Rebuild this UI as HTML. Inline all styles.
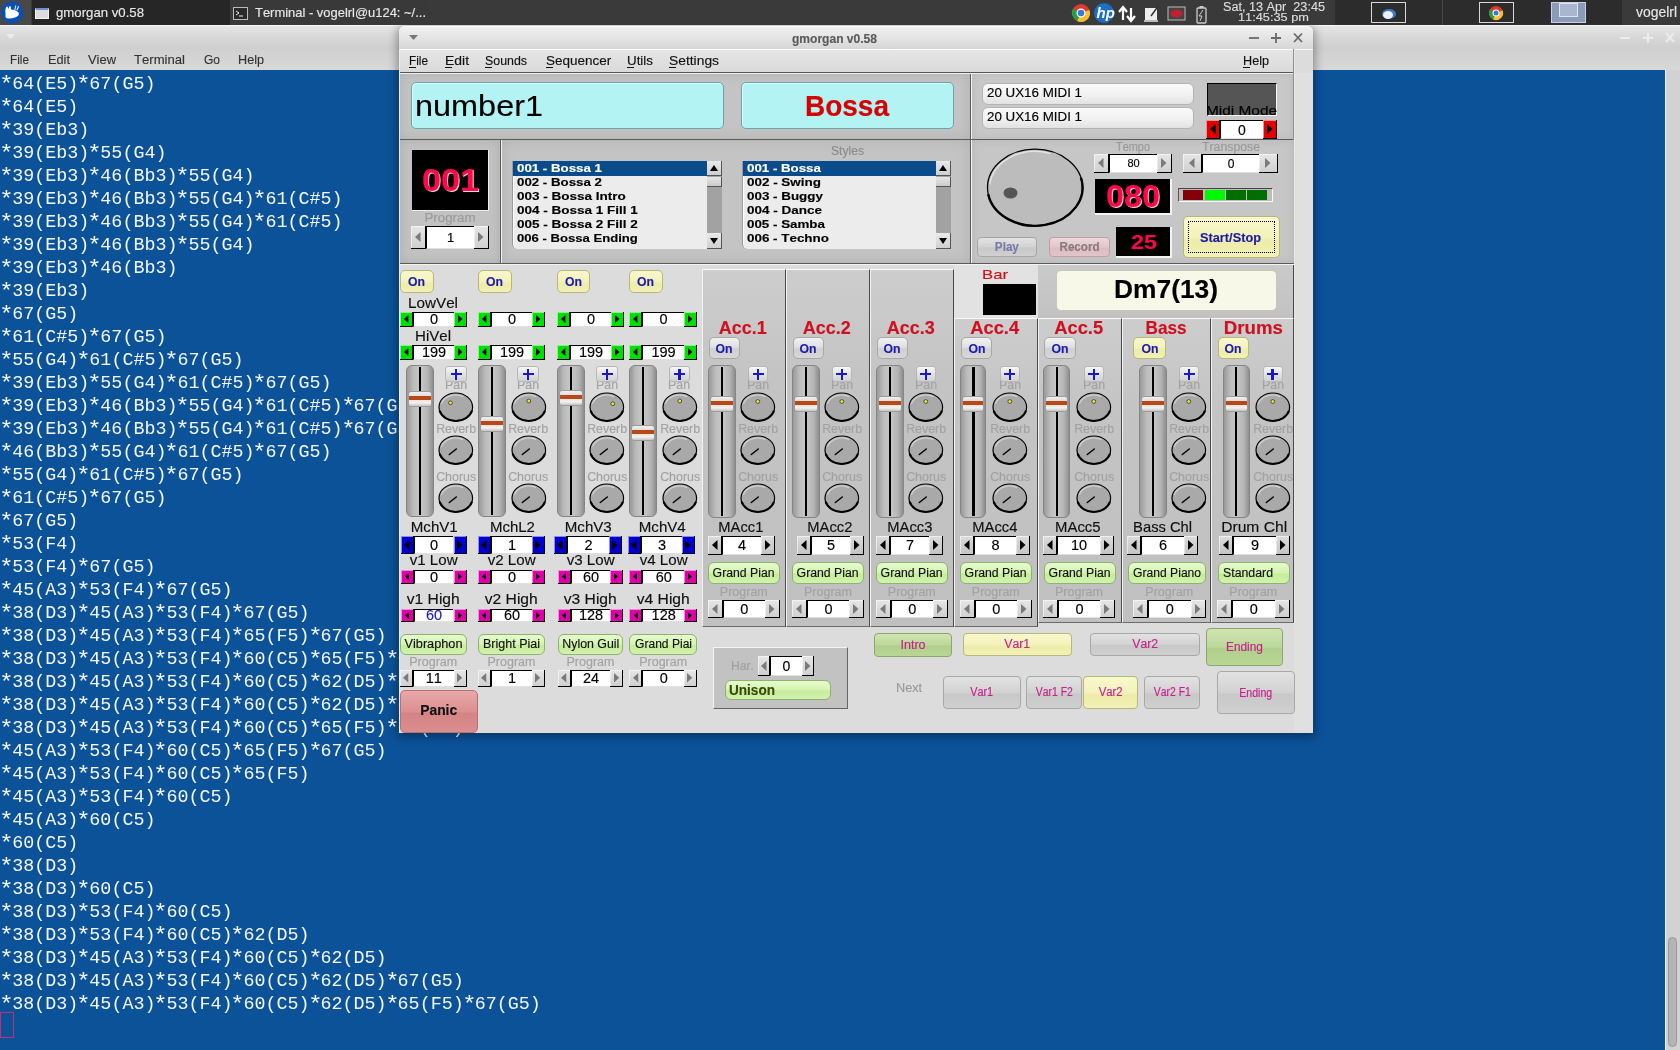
<!DOCTYPE html>
<html><head><meta charset="utf-8"><title>gmorgan</title>
<style>
html,body{margin:0;padding:0;width:1680px;height:1050px;overflow:hidden;background:#0b5299;}
body{position:relative;font-family:"Liberation Sans", sans-serif;font-kerning:none;}
div{position:absolute;box-sizing:border-box;}
#root{left:0;top:0;width:1680px;height:1050px;will-change:transform;}
#root div{-webkit-text-stroke:0.15px currentColor;}
svg{position:absolute;overflow:visible;}
</style></head><body><div id="root">
<div style="left:0px;top:25px;width:1680px;height:24px;background:linear-gradient(#e6e6e6,#dadada 40%,#cecece);border-top:1px solid #f6f6f6;"></div>
<svg style="left:5px;top:33px" width="12" height="8"><path d="M1 1 H10 L5.5 6 Z" fill="#ececec"/></svg>
<svg style="left:1617px;top:30px" width="60" height="16"><path d="M3 8 H13" stroke="#ececec" stroke-width="2"/><path d="M26 8 H36 M31 3 V13" stroke="#ececec" stroke-width="2"/><path d="M49 3 L57 12 M57 3 L49 12" stroke="#ececec" stroke-width="2"/></svg>
<div style="left:0px;top:49px;width:1680px;height:21px;background:linear-gradient(#d0d0d0,#d8d8d8);"></div>
<div style="left:9.50px;top:52.57px;font-size:13.5px;line-height:13.5px;color:#333;white-space:pre;transform:scaleX(0.8734);transform-origin:0 0;">File</div>
<div style="left:47.50px;top:52.57px;font-size:13.5px;line-height:13.5px;color:#333;white-space:pre;transform:scaleX(0.9457);transform-origin:0 0;">Edit</div>
<div style="left:88.00px;top:52.57px;font-size:13.5px;line-height:13.5px;color:#333;white-space:pre;transform:scaleX(0.9569);transform-origin:0 0;">View</div>
<div style="left:134.00px;top:52.57px;font-size:13.5px;line-height:13.5px;color:#333;white-space:pre;transform:scaleX(0.9712);transform-origin:0 0;">Terminal</div>
<div style="left:203.50px;top:52.57px;font-size:13.5px;line-height:13.5px;color:#333;white-space:pre;transform:scaleX(0.8885);transform-origin:0 0;">Go</div>
<div style="left:238.00px;top:52.57px;font-size:13.5px;line-height:13.5px;color:#333;white-space:pre;transform:scaleX(0.9364);transform-origin:0 0;">Help</div>
<div style="left:0px;top:70px;width:1665px;height:980px;background:#0b5299;"></div>
<div style="left:1665px;top:70px;width:15px;height:980px;background:#d2d2d2;border-left:1px solid #eef2f6;"></div>
<div style="left:1668px;top:937px;width:9px;height:110px;background:#b4b4b4;border:1px solid #9a9a9a;border-radius:5px;"></div>
<div style="left:1.3px;top:75.84px;font-size:18.35px;line-height:18.35px;color:#f6f8fc;white-space:pre;font-family:'Liberation Mono', monospace;-webkit-text-stroke:0;"><span style="display:inline-block;width:11.01px;text-align:center;transform:translateY(1.4px) scale(1.3,1.2);transform-origin:50% 55%">*</span>64(E5)<span style="display:inline-block;width:11.01px;text-align:center;transform:translateY(1.4px) scale(1.3,1.2);transform-origin:50% 55%">*</span>67(G5)</div>
<div style="left:1.3px;top:98.84px;font-size:18.35px;line-height:18.35px;color:#f6f8fc;white-space:pre;font-family:'Liberation Mono', monospace;-webkit-text-stroke:0;"><span style="display:inline-block;width:11.01px;text-align:center;transform:translateY(1.4px) scale(1.3,1.2);transform-origin:50% 55%">*</span>64(E5)</div>
<div style="left:1.3px;top:121.84px;font-size:18.35px;line-height:18.35px;color:#f6f8fc;white-space:pre;font-family:'Liberation Mono', monospace;-webkit-text-stroke:0;"><span style="display:inline-block;width:11.01px;text-align:center;transform:translateY(1.4px) scale(1.3,1.2);transform-origin:50% 55%">*</span>39(Eb3)</div>
<div style="left:1.3px;top:144.84px;font-size:18.35px;line-height:18.35px;color:#f6f8fc;white-space:pre;font-family:'Liberation Mono', monospace;-webkit-text-stroke:0;"><span style="display:inline-block;width:11.01px;text-align:center;transform:translateY(1.4px) scale(1.3,1.2);transform-origin:50% 55%">*</span>39(Eb3)<span style="display:inline-block;width:11.01px;text-align:center;transform:translateY(1.4px) scale(1.3,1.2);transform-origin:50% 55%">*</span>55(G4)</div>
<div style="left:1.3px;top:167.84px;font-size:18.35px;line-height:18.35px;color:#f6f8fc;white-space:pre;font-family:'Liberation Mono', monospace;-webkit-text-stroke:0;"><span style="display:inline-block;width:11.01px;text-align:center;transform:translateY(1.4px) scale(1.3,1.2);transform-origin:50% 55%">*</span>39(Eb3)<span style="display:inline-block;width:11.01px;text-align:center;transform:translateY(1.4px) scale(1.3,1.2);transform-origin:50% 55%">*</span>46(Bb3)<span style="display:inline-block;width:11.01px;text-align:center;transform:translateY(1.4px) scale(1.3,1.2);transform-origin:50% 55%">*</span>55(G4)</div>
<div style="left:1.3px;top:190.84px;font-size:18.35px;line-height:18.35px;color:#f6f8fc;white-space:pre;font-family:'Liberation Mono', monospace;-webkit-text-stroke:0;"><span style="display:inline-block;width:11.01px;text-align:center;transform:translateY(1.4px) scale(1.3,1.2);transform-origin:50% 55%">*</span>39(Eb3)<span style="display:inline-block;width:11.01px;text-align:center;transform:translateY(1.4px) scale(1.3,1.2);transform-origin:50% 55%">*</span>46(Bb3)<span style="display:inline-block;width:11.01px;text-align:center;transform:translateY(1.4px) scale(1.3,1.2);transform-origin:50% 55%">*</span>55(G4)<span style="display:inline-block;width:11.01px;text-align:center;transform:translateY(1.4px) scale(1.3,1.2);transform-origin:50% 55%">*</span>61(C#5)</div>
<div style="left:1.3px;top:213.84px;font-size:18.35px;line-height:18.35px;color:#f6f8fc;white-space:pre;font-family:'Liberation Mono', monospace;-webkit-text-stroke:0;"><span style="display:inline-block;width:11.01px;text-align:center;transform:translateY(1.4px) scale(1.3,1.2);transform-origin:50% 55%">*</span>39(Eb3)<span style="display:inline-block;width:11.01px;text-align:center;transform:translateY(1.4px) scale(1.3,1.2);transform-origin:50% 55%">*</span>46(Bb3)<span style="display:inline-block;width:11.01px;text-align:center;transform:translateY(1.4px) scale(1.3,1.2);transform-origin:50% 55%">*</span>55(G4)<span style="display:inline-block;width:11.01px;text-align:center;transform:translateY(1.4px) scale(1.3,1.2);transform-origin:50% 55%">*</span>61(C#5)</div>
<div style="left:1.3px;top:236.84px;font-size:18.35px;line-height:18.35px;color:#f6f8fc;white-space:pre;font-family:'Liberation Mono', monospace;-webkit-text-stroke:0;"><span style="display:inline-block;width:11.01px;text-align:center;transform:translateY(1.4px) scale(1.3,1.2);transform-origin:50% 55%">*</span>39(Eb3)<span style="display:inline-block;width:11.01px;text-align:center;transform:translateY(1.4px) scale(1.3,1.2);transform-origin:50% 55%">*</span>46(Bb3)<span style="display:inline-block;width:11.01px;text-align:center;transform:translateY(1.4px) scale(1.3,1.2);transform-origin:50% 55%">*</span>55(G4)</div>
<div style="left:1.3px;top:259.84px;font-size:18.35px;line-height:18.35px;color:#f6f8fc;white-space:pre;font-family:'Liberation Mono', monospace;-webkit-text-stroke:0;"><span style="display:inline-block;width:11.01px;text-align:center;transform:translateY(1.4px) scale(1.3,1.2);transform-origin:50% 55%">*</span>39(Eb3)<span style="display:inline-block;width:11.01px;text-align:center;transform:translateY(1.4px) scale(1.3,1.2);transform-origin:50% 55%">*</span>46(Bb3)</div>
<div style="left:1.3px;top:282.84px;font-size:18.35px;line-height:18.35px;color:#f6f8fc;white-space:pre;font-family:'Liberation Mono', monospace;-webkit-text-stroke:0;"><span style="display:inline-block;width:11.01px;text-align:center;transform:translateY(1.4px) scale(1.3,1.2);transform-origin:50% 55%">*</span>39(Eb3)</div>
<div style="left:1.3px;top:305.84px;font-size:18.35px;line-height:18.35px;color:#f6f8fc;white-space:pre;font-family:'Liberation Mono', monospace;-webkit-text-stroke:0;"><span style="display:inline-block;width:11.01px;text-align:center;transform:translateY(1.4px) scale(1.3,1.2);transform-origin:50% 55%">*</span>67(G5)</div>
<div style="left:1.3px;top:328.84px;font-size:18.35px;line-height:18.35px;color:#f6f8fc;white-space:pre;font-family:'Liberation Mono', monospace;-webkit-text-stroke:0;"><span style="display:inline-block;width:11.01px;text-align:center;transform:translateY(1.4px) scale(1.3,1.2);transform-origin:50% 55%">*</span>61(C#5)<span style="display:inline-block;width:11.01px;text-align:center;transform:translateY(1.4px) scale(1.3,1.2);transform-origin:50% 55%">*</span>67(G5)</div>
<div style="left:1.3px;top:351.84px;font-size:18.35px;line-height:18.35px;color:#f6f8fc;white-space:pre;font-family:'Liberation Mono', monospace;-webkit-text-stroke:0;"><span style="display:inline-block;width:11.01px;text-align:center;transform:translateY(1.4px) scale(1.3,1.2);transform-origin:50% 55%">*</span>55(G4)<span style="display:inline-block;width:11.01px;text-align:center;transform:translateY(1.4px) scale(1.3,1.2);transform-origin:50% 55%">*</span>61(C#5)<span style="display:inline-block;width:11.01px;text-align:center;transform:translateY(1.4px) scale(1.3,1.2);transform-origin:50% 55%">*</span>67(G5)</div>
<div style="left:1.3px;top:374.84px;font-size:18.35px;line-height:18.35px;color:#f6f8fc;white-space:pre;font-family:'Liberation Mono', monospace;-webkit-text-stroke:0;"><span style="display:inline-block;width:11.01px;text-align:center;transform:translateY(1.4px) scale(1.3,1.2);transform-origin:50% 55%">*</span>39(Eb3)<span style="display:inline-block;width:11.01px;text-align:center;transform:translateY(1.4px) scale(1.3,1.2);transform-origin:50% 55%">*</span>55(G4)<span style="display:inline-block;width:11.01px;text-align:center;transform:translateY(1.4px) scale(1.3,1.2);transform-origin:50% 55%">*</span>61(C#5)<span style="display:inline-block;width:11.01px;text-align:center;transform:translateY(1.4px) scale(1.3,1.2);transform-origin:50% 55%">*</span>67(G5)</div>
<div style="left:1.3px;top:397.84px;font-size:18.35px;line-height:18.35px;color:#f6f8fc;white-space:pre;font-family:'Liberation Mono', monospace;-webkit-text-stroke:0;"><span style="display:inline-block;width:11.01px;text-align:center;transform:translateY(1.4px) scale(1.3,1.2);transform-origin:50% 55%">*</span>39(Eb3)<span style="display:inline-block;width:11.01px;text-align:center;transform:translateY(1.4px) scale(1.3,1.2);transform-origin:50% 55%">*</span>46(Bb3)<span style="display:inline-block;width:11.01px;text-align:center;transform:translateY(1.4px) scale(1.3,1.2);transform-origin:50% 55%">*</span>55(G4)<span style="display:inline-block;width:11.01px;text-align:center;transform:translateY(1.4px) scale(1.3,1.2);transform-origin:50% 55%">*</span>61(C#5)<span style="display:inline-block;width:11.01px;text-align:center;transform:translateY(1.4px) scale(1.3,1.2);transform-origin:50% 55%">*</span>67(G5)</div>
<div style="left:1.3px;top:420.84px;font-size:18.35px;line-height:18.35px;color:#f6f8fc;white-space:pre;font-family:'Liberation Mono', monospace;-webkit-text-stroke:0;"><span style="display:inline-block;width:11.01px;text-align:center;transform:translateY(1.4px) scale(1.3,1.2);transform-origin:50% 55%">*</span>39(Eb3)<span style="display:inline-block;width:11.01px;text-align:center;transform:translateY(1.4px) scale(1.3,1.2);transform-origin:50% 55%">*</span>46(Bb3)<span style="display:inline-block;width:11.01px;text-align:center;transform:translateY(1.4px) scale(1.3,1.2);transform-origin:50% 55%">*</span>55(G4)<span style="display:inline-block;width:11.01px;text-align:center;transform:translateY(1.4px) scale(1.3,1.2);transform-origin:50% 55%">*</span>61(C#5)<span style="display:inline-block;width:11.01px;text-align:center;transform:translateY(1.4px) scale(1.3,1.2);transform-origin:50% 55%">*</span>67(G5)</div>
<div style="left:1.3px;top:443.84px;font-size:18.35px;line-height:18.35px;color:#f6f8fc;white-space:pre;font-family:'Liberation Mono', monospace;-webkit-text-stroke:0;"><span style="display:inline-block;width:11.01px;text-align:center;transform:translateY(1.4px) scale(1.3,1.2);transform-origin:50% 55%">*</span>46(Bb3)<span style="display:inline-block;width:11.01px;text-align:center;transform:translateY(1.4px) scale(1.3,1.2);transform-origin:50% 55%">*</span>55(G4)<span style="display:inline-block;width:11.01px;text-align:center;transform:translateY(1.4px) scale(1.3,1.2);transform-origin:50% 55%">*</span>61(C#5)<span style="display:inline-block;width:11.01px;text-align:center;transform:translateY(1.4px) scale(1.3,1.2);transform-origin:50% 55%">*</span>67(G5)</div>
<div style="left:1.3px;top:466.84px;font-size:18.35px;line-height:18.35px;color:#f6f8fc;white-space:pre;font-family:'Liberation Mono', monospace;-webkit-text-stroke:0;"><span style="display:inline-block;width:11.01px;text-align:center;transform:translateY(1.4px) scale(1.3,1.2);transform-origin:50% 55%">*</span>55(G4)<span style="display:inline-block;width:11.01px;text-align:center;transform:translateY(1.4px) scale(1.3,1.2);transform-origin:50% 55%">*</span>61(C#5)<span style="display:inline-block;width:11.01px;text-align:center;transform:translateY(1.4px) scale(1.3,1.2);transform-origin:50% 55%">*</span>67(G5)</div>
<div style="left:1.3px;top:489.84px;font-size:18.35px;line-height:18.35px;color:#f6f8fc;white-space:pre;font-family:'Liberation Mono', monospace;-webkit-text-stroke:0;"><span style="display:inline-block;width:11.01px;text-align:center;transform:translateY(1.4px) scale(1.3,1.2);transform-origin:50% 55%">*</span>61(C#5)<span style="display:inline-block;width:11.01px;text-align:center;transform:translateY(1.4px) scale(1.3,1.2);transform-origin:50% 55%">*</span>67(G5)</div>
<div style="left:1.3px;top:512.84px;font-size:18.35px;line-height:18.35px;color:#f6f8fc;white-space:pre;font-family:'Liberation Mono', monospace;-webkit-text-stroke:0;"><span style="display:inline-block;width:11.01px;text-align:center;transform:translateY(1.4px) scale(1.3,1.2);transform-origin:50% 55%">*</span>67(G5)</div>
<div style="left:1.3px;top:535.84px;font-size:18.35px;line-height:18.35px;color:#f6f8fc;white-space:pre;font-family:'Liberation Mono', monospace;-webkit-text-stroke:0;"><span style="display:inline-block;width:11.01px;text-align:center;transform:translateY(1.4px) scale(1.3,1.2);transform-origin:50% 55%">*</span>53(F4)</div>
<div style="left:1.3px;top:558.84px;font-size:18.35px;line-height:18.35px;color:#f6f8fc;white-space:pre;font-family:'Liberation Mono', monospace;-webkit-text-stroke:0;"><span style="display:inline-block;width:11.01px;text-align:center;transform:translateY(1.4px) scale(1.3,1.2);transform-origin:50% 55%">*</span>53(F4)<span style="display:inline-block;width:11.01px;text-align:center;transform:translateY(1.4px) scale(1.3,1.2);transform-origin:50% 55%">*</span>67(G5)</div>
<div style="left:1.3px;top:581.84px;font-size:18.35px;line-height:18.35px;color:#f6f8fc;white-space:pre;font-family:'Liberation Mono', monospace;-webkit-text-stroke:0;"><span style="display:inline-block;width:11.01px;text-align:center;transform:translateY(1.4px) scale(1.3,1.2);transform-origin:50% 55%">*</span>45(A3)<span style="display:inline-block;width:11.01px;text-align:center;transform:translateY(1.4px) scale(1.3,1.2);transform-origin:50% 55%">*</span>53(F4)<span style="display:inline-block;width:11.01px;text-align:center;transform:translateY(1.4px) scale(1.3,1.2);transform-origin:50% 55%">*</span>67(G5)</div>
<div style="left:1.3px;top:604.84px;font-size:18.35px;line-height:18.35px;color:#f6f8fc;white-space:pre;font-family:'Liberation Mono', monospace;-webkit-text-stroke:0;"><span style="display:inline-block;width:11.01px;text-align:center;transform:translateY(1.4px) scale(1.3,1.2);transform-origin:50% 55%">*</span>38(D3)<span style="display:inline-block;width:11.01px;text-align:center;transform:translateY(1.4px) scale(1.3,1.2);transform-origin:50% 55%">*</span>45(A3)<span style="display:inline-block;width:11.01px;text-align:center;transform:translateY(1.4px) scale(1.3,1.2);transform-origin:50% 55%">*</span>53(F4)<span style="display:inline-block;width:11.01px;text-align:center;transform:translateY(1.4px) scale(1.3,1.2);transform-origin:50% 55%">*</span>67(G5)</div>
<div style="left:1.3px;top:627.84px;font-size:18.35px;line-height:18.35px;color:#f6f8fc;white-space:pre;font-family:'Liberation Mono', monospace;-webkit-text-stroke:0;"><span style="display:inline-block;width:11.01px;text-align:center;transform:translateY(1.4px) scale(1.3,1.2);transform-origin:50% 55%">*</span>38(D3)<span style="display:inline-block;width:11.01px;text-align:center;transform:translateY(1.4px) scale(1.3,1.2);transform-origin:50% 55%">*</span>45(A3)<span style="display:inline-block;width:11.01px;text-align:center;transform:translateY(1.4px) scale(1.3,1.2);transform-origin:50% 55%">*</span>53(F4)<span style="display:inline-block;width:11.01px;text-align:center;transform:translateY(1.4px) scale(1.3,1.2);transform-origin:50% 55%">*</span>65(F5)<span style="display:inline-block;width:11.01px;text-align:center;transform:translateY(1.4px) scale(1.3,1.2);transform-origin:50% 55%">*</span>67(G5)</div>
<div style="left:1.3px;top:650.84px;font-size:18.35px;line-height:18.35px;color:#f6f8fc;white-space:pre;font-family:'Liberation Mono', monospace;-webkit-text-stroke:0;"><span style="display:inline-block;width:11.01px;text-align:center;transform:translateY(1.4px) scale(1.3,1.2);transform-origin:50% 55%">*</span>38(D3)<span style="display:inline-block;width:11.01px;text-align:center;transform:translateY(1.4px) scale(1.3,1.2);transform-origin:50% 55%">*</span>45(A3)<span style="display:inline-block;width:11.01px;text-align:center;transform:translateY(1.4px) scale(1.3,1.2);transform-origin:50% 55%">*</span>53(F4)<span style="display:inline-block;width:11.01px;text-align:center;transform:translateY(1.4px) scale(1.3,1.2);transform-origin:50% 55%">*</span>60(C5)<span style="display:inline-block;width:11.01px;text-align:center;transform:translateY(1.4px) scale(1.3,1.2);transform-origin:50% 55%">*</span>65(F5)<span style="display:inline-block;width:11.01px;text-align:center;transform:translateY(1.4px) scale(1.3,1.2);transform-origin:50% 55%">*</span>67(G5)</div>
<div style="left:1.3px;top:673.84px;font-size:18.35px;line-height:18.35px;color:#f6f8fc;white-space:pre;font-family:'Liberation Mono', monospace;-webkit-text-stroke:0;"><span style="display:inline-block;width:11.01px;text-align:center;transform:translateY(1.4px) scale(1.3,1.2);transform-origin:50% 55%">*</span>38(D3)<span style="display:inline-block;width:11.01px;text-align:center;transform:translateY(1.4px) scale(1.3,1.2);transform-origin:50% 55%">*</span>45(A3)<span style="display:inline-block;width:11.01px;text-align:center;transform:translateY(1.4px) scale(1.3,1.2);transform-origin:50% 55%">*</span>53(F4)<span style="display:inline-block;width:11.01px;text-align:center;transform:translateY(1.4px) scale(1.3,1.2);transform-origin:50% 55%">*</span>60(C5)<span style="display:inline-block;width:11.01px;text-align:center;transform:translateY(1.4px) scale(1.3,1.2);transform-origin:50% 55%">*</span>62(D5)<span style="display:inline-block;width:11.01px;text-align:center;transform:translateY(1.4px) scale(1.3,1.2);transform-origin:50% 55%">*</span>65(F5)<span style="display:inline-block;width:11.01px;text-align:center;transform:translateY(1.4px) scale(1.3,1.2);transform-origin:50% 55%">*</span>67(G5)</div>
<div style="left:1.3px;top:696.84px;font-size:18.35px;line-height:18.35px;color:#f6f8fc;white-space:pre;font-family:'Liberation Mono', monospace;-webkit-text-stroke:0;"><span style="display:inline-block;width:11.01px;text-align:center;transform:translateY(1.4px) scale(1.3,1.2);transform-origin:50% 55%">*</span>38(D3)<span style="display:inline-block;width:11.01px;text-align:center;transform:translateY(1.4px) scale(1.3,1.2);transform-origin:50% 55%">*</span>45(A3)<span style="display:inline-block;width:11.01px;text-align:center;transform:translateY(1.4px) scale(1.3,1.2);transform-origin:50% 55%">*</span>53(F4)<span style="display:inline-block;width:11.01px;text-align:center;transform:translateY(1.4px) scale(1.3,1.2);transform-origin:50% 55%">*</span>60(C5)<span style="display:inline-block;width:11.01px;text-align:center;transform:translateY(1.4px) scale(1.3,1.2);transform-origin:50% 55%">*</span>62(D5)<span style="display:inline-block;width:11.01px;text-align:center;transform:translateY(1.4px) scale(1.3,1.2);transform-origin:50% 55%">*</span>65(F5)<span style="display:inline-block;width:11.01px;text-align:center;transform:translateY(1.4px) scale(1.3,1.2);transform-origin:50% 55%">*</span>67(G5)</div>
<div style="left:1.3px;top:719.84px;font-size:18.35px;line-height:18.35px;color:#f6f8fc;white-space:pre;font-family:'Liberation Mono', monospace;-webkit-text-stroke:0;"><span style="display:inline-block;width:11.01px;text-align:center;transform:translateY(1.4px) scale(1.3,1.2);transform-origin:50% 55%">*</span>38(D3)<span style="display:inline-block;width:11.01px;text-align:center;transform:translateY(1.4px) scale(1.3,1.2);transform-origin:50% 55%">*</span>45(A3)<span style="display:inline-block;width:11.01px;text-align:center;transform:translateY(1.4px) scale(1.3,1.2);transform-origin:50% 55%">*</span>53(F4)<span style="display:inline-block;width:11.01px;text-align:center;transform:translateY(1.4px) scale(1.3,1.2);transform-origin:50% 55%">*</span>60(C5)<span style="display:inline-block;width:11.01px;text-align:center;transform:translateY(1.4px) scale(1.3,1.2);transform-origin:50% 55%">*</span>65(F5)<span style="display:inline-block;width:11.01px;text-align:center;transform:translateY(1.4px) scale(1.3,1.2);transform-origin:50% 55%">*</span>67(G5)</div>
<div style="left:1.3px;top:742.84px;font-size:18.35px;line-height:18.35px;color:#f6f8fc;white-space:pre;font-family:'Liberation Mono', monospace;-webkit-text-stroke:0;"><span style="display:inline-block;width:11.01px;text-align:center;transform:translateY(1.4px) scale(1.3,1.2);transform-origin:50% 55%">*</span>45(A3)<span style="display:inline-block;width:11.01px;text-align:center;transform:translateY(1.4px) scale(1.3,1.2);transform-origin:50% 55%">*</span>53(F4)<span style="display:inline-block;width:11.01px;text-align:center;transform:translateY(1.4px) scale(1.3,1.2);transform-origin:50% 55%">*</span>60(C5)<span style="display:inline-block;width:11.01px;text-align:center;transform:translateY(1.4px) scale(1.3,1.2);transform-origin:50% 55%">*</span>65(F5)<span style="display:inline-block;width:11.01px;text-align:center;transform:translateY(1.4px) scale(1.3,1.2);transform-origin:50% 55%">*</span>67(G5)</div>
<div style="left:1.3px;top:765.84px;font-size:18.35px;line-height:18.35px;color:#f6f8fc;white-space:pre;font-family:'Liberation Mono', monospace;-webkit-text-stroke:0;"><span style="display:inline-block;width:11.01px;text-align:center;transform:translateY(1.4px) scale(1.3,1.2);transform-origin:50% 55%">*</span>45(A3)<span style="display:inline-block;width:11.01px;text-align:center;transform:translateY(1.4px) scale(1.3,1.2);transform-origin:50% 55%">*</span>53(F4)<span style="display:inline-block;width:11.01px;text-align:center;transform:translateY(1.4px) scale(1.3,1.2);transform-origin:50% 55%">*</span>60(C5)<span style="display:inline-block;width:11.01px;text-align:center;transform:translateY(1.4px) scale(1.3,1.2);transform-origin:50% 55%">*</span>65(F5)</div>
<div style="left:1.3px;top:788.84px;font-size:18.35px;line-height:18.35px;color:#f6f8fc;white-space:pre;font-family:'Liberation Mono', monospace;-webkit-text-stroke:0;"><span style="display:inline-block;width:11.01px;text-align:center;transform:translateY(1.4px) scale(1.3,1.2);transform-origin:50% 55%">*</span>45(A3)<span style="display:inline-block;width:11.01px;text-align:center;transform:translateY(1.4px) scale(1.3,1.2);transform-origin:50% 55%">*</span>53(F4)<span style="display:inline-block;width:11.01px;text-align:center;transform:translateY(1.4px) scale(1.3,1.2);transform-origin:50% 55%">*</span>60(C5)</div>
<div style="left:1.3px;top:811.84px;font-size:18.35px;line-height:18.35px;color:#f6f8fc;white-space:pre;font-family:'Liberation Mono', monospace;-webkit-text-stroke:0;"><span style="display:inline-block;width:11.01px;text-align:center;transform:translateY(1.4px) scale(1.3,1.2);transform-origin:50% 55%">*</span>45(A3)<span style="display:inline-block;width:11.01px;text-align:center;transform:translateY(1.4px) scale(1.3,1.2);transform-origin:50% 55%">*</span>60(C5)</div>
<div style="left:1.3px;top:834.84px;font-size:18.35px;line-height:18.35px;color:#f6f8fc;white-space:pre;font-family:'Liberation Mono', monospace;-webkit-text-stroke:0;"><span style="display:inline-block;width:11.01px;text-align:center;transform:translateY(1.4px) scale(1.3,1.2);transform-origin:50% 55%">*</span>60(C5)</div>
<div style="left:1.3px;top:857.84px;font-size:18.35px;line-height:18.35px;color:#f6f8fc;white-space:pre;font-family:'Liberation Mono', monospace;-webkit-text-stroke:0;"><span style="display:inline-block;width:11.01px;text-align:center;transform:translateY(1.4px) scale(1.3,1.2);transform-origin:50% 55%">*</span>38(D3)</div>
<div style="left:1.3px;top:880.84px;font-size:18.35px;line-height:18.35px;color:#f6f8fc;white-space:pre;font-family:'Liberation Mono', monospace;-webkit-text-stroke:0;"><span style="display:inline-block;width:11.01px;text-align:center;transform:translateY(1.4px) scale(1.3,1.2);transform-origin:50% 55%">*</span>38(D3)<span style="display:inline-block;width:11.01px;text-align:center;transform:translateY(1.4px) scale(1.3,1.2);transform-origin:50% 55%">*</span>60(C5)</div>
<div style="left:1.3px;top:903.84px;font-size:18.35px;line-height:18.35px;color:#f6f8fc;white-space:pre;font-family:'Liberation Mono', monospace;-webkit-text-stroke:0;"><span style="display:inline-block;width:11.01px;text-align:center;transform:translateY(1.4px) scale(1.3,1.2);transform-origin:50% 55%">*</span>38(D3)<span style="display:inline-block;width:11.01px;text-align:center;transform:translateY(1.4px) scale(1.3,1.2);transform-origin:50% 55%">*</span>53(F4)<span style="display:inline-block;width:11.01px;text-align:center;transform:translateY(1.4px) scale(1.3,1.2);transform-origin:50% 55%">*</span>60(C5)</div>
<div style="left:1.3px;top:926.84px;font-size:18.35px;line-height:18.35px;color:#f6f8fc;white-space:pre;font-family:'Liberation Mono', monospace;-webkit-text-stroke:0;"><span style="display:inline-block;width:11.01px;text-align:center;transform:translateY(1.4px) scale(1.3,1.2);transform-origin:50% 55%">*</span>38(D3)<span style="display:inline-block;width:11.01px;text-align:center;transform:translateY(1.4px) scale(1.3,1.2);transform-origin:50% 55%">*</span>53(F4)<span style="display:inline-block;width:11.01px;text-align:center;transform:translateY(1.4px) scale(1.3,1.2);transform-origin:50% 55%">*</span>60(C5)<span style="display:inline-block;width:11.01px;text-align:center;transform:translateY(1.4px) scale(1.3,1.2);transform-origin:50% 55%">*</span>62(D5)</div>
<div style="left:1.3px;top:949.84px;font-size:18.35px;line-height:18.35px;color:#f6f8fc;white-space:pre;font-family:'Liberation Mono', monospace;-webkit-text-stroke:0;"><span style="display:inline-block;width:11.01px;text-align:center;transform:translateY(1.4px) scale(1.3,1.2);transform-origin:50% 55%">*</span>38(D3)<span style="display:inline-block;width:11.01px;text-align:center;transform:translateY(1.4px) scale(1.3,1.2);transform-origin:50% 55%">*</span>45(A3)<span style="display:inline-block;width:11.01px;text-align:center;transform:translateY(1.4px) scale(1.3,1.2);transform-origin:50% 55%">*</span>53(F4)<span style="display:inline-block;width:11.01px;text-align:center;transform:translateY(1.4px) scale(1.3,1.2);transform-origin:50% 55%">*</span>60(C5)<span style="display:inline-block;width:11.01px;text-align:center;transform:translateY(1.4px) scale(1.3,1.2);transform-origin:50% 55%">*</span>62(D5)</div>
<div style="left:1.3px;top:972.84px;font-size:18.35px;line-height:18.35px;color:#f6f8fc;white-space:pre;font-family:'Liberation Mono', monospace;-webkit-text-stroke:0;"><span style="display:inline-block;width:11.01px;text-align:center;transform:translateY(1.4px) scale(1.3,1.2);transform-origin:50% 55%">*</span>38(D3)<span style="display:inline-block;width:11.01px;text-align:center;transform:translateY(1.4px) scale(1.3,1.2);transform-origin:50% 55%">*</span>45(A3)<span style="display:inline-block;width:11.01px;text-align:center;transform:translateY(1.4px) scale(1.3,1.2);transform-origin:50% 55%">*</span>53(F4)<span style="display:inline-block;width:11.01px;text-align:center;transform:translateY(1.4px) scale(1.3,1.2);transform-origin:50% 55%">*</span>60(C5)<span style="display:inline-block;width:11.01px;text-align:center;transform:translateY(1.4px) scale(1.3,1.2);transform-origin:50% 55%">*</span>62(D5)<span style="display:inline-block;width:11.01px;text-align:center;transform:translateY(1.4px) scale(1.3,1.2);transform-origin:50% 55%">*</span>67(G5)</div>
<div style="left:1.3px;top:995.84px;font-size:18.35px;line-height:18.35px;color:#f6f8fc;white-space:pre;font-family:'Liberation Mono', monospace;-webkit-text-stroke:0;"><span style="display:inline-block;width:11.01px;text-align:center;transform:translateY(1.4px) scale(1.3,1.2);transform-origin:50% 55%">*</span>38(D3)<span style="display:inline-block;width:11.01px;text-align:center;transform:translateY(1.4px) scale(1.3,1.2);transform-origin:50% 55%">*</span>45(A3)<span style="display:inline-block;width:11.01px;text-align:center;transform:translateY(1.4px) scale(1.3,1.2);transform-origin:50% 55%">*</span>53(F4)<span style="display:inline-block;width:11.01px;text-align:center;transform:translateY(1.4px) scale(1.3,1.2);transform-origin:50% 55%">*</span>60(C5)<span style="display:inline-block;width:11.01px;text-align:center;transform:translateY(1.4px) scale(1.3,1.2);transform-origin:50% 55%">*</span>62(D5)<span style="display:inline-block;width:11.01px;text-align:center;transform:translateY(1.4px) scale(1.3,1.2);transform-origin:50% 55%">*</span>65(F5)<span style="display:inline-block;width:11.01px;text-align:center;transform:translateY(1.4px) scale(1.3,1.2);transform-origin:50% 55%">*</span>67(G5)</div>
<div style="left:0px;top:1012px;width:14px;height:26px;border:1px solid #c0307a;"></div>
<div style="left:399px;top:26px;width:914px;height:707px;background:#dcdcdc;border-radius:6px 6px 0 0;box-shadow:0 2px 10px 2px rgba(0,0,0,.35);border-left:1px solid #e8eef2;"></div>
<div style="left:399px;top:26px;width:914px;height:23px;background:linear-gradient(#f0f0f0,#e4e4e4 50%,#d6d6d6);border-radius:6px 6px 0 0;border-top:1px solid #fff;"></div>
<svg style="left:408px;top:34px" width="12" height="8"><path d="M1 1 H10 L5.5 6 Z" fill="#777"/></svg>
<div style="left:792.00px;top:32.92px;font-size:12.5px;line-height:12.5px;color:#5a5a5a;white-space:pre;font-weight:bold;transform:scaleX(0.9634);transform-origin:0 0;">gmorgan v0.58</div>
<svg style="left:1244px;top:30px" width="64" height="16"><path d="M5 8 H15" stroke="#6a6a6a" stroke-width="1.8"/><path d="M27 8 H37 M32 3 V13" stroke="#6a6a6a" stroke-width="1.8"/><path d="M50 3.5 L58 12 M58 3.5 L50 12" stroke="#6a6a6a" stroke-width="1.8"/></svg>
<div style="left:400px;top:49px;width:913px;height:1px;background:#fafafa;"></div>
<div style="left:400px;top:50px;width:894px;height:23px;background:linear-gradient(#e6e6e6,#dadada);border-bottom:1px solid #555;border-right:1px solid #999;"></div>
<div style="left:409.00px;top:53.57px;font-size:13.5px;line-height:13.5px;color:#111;white-space:pre;transform:scaleX(0.8734);transform-origin:0 0;">File</div>
<div style="left:409px;top:67px;width:7px;height:1px;background:#111;"></div>
<div style="left:445.00px;top:53.57px;font-size:13.5px;line-height:13.5px;color:#111;white-space:pre;transform:scaleX(1.0317);transform-origin:0 0;">Edit</div>
<div style="left:445px;top:67px;width:7px;height:1px;background:#111;"></div>
<div style="left:485.00px;top:53.57px;font-size:13.5px;line-height:13.5px;color:#111;white-space:pre;transform:scaleX(0.9173);transform-origin:0 0;">Sounds</div>
<div style="left:485px;top:67px;width:7px;height:1px;background:#111;"></div>
<div style="left:546.00px;top:53.57px;font-size:13.5px;line-height:13.5px;color:#111;white-space:pre;">Sequencer</div>
<div style="left:546px;top:67px;width:7px;height:1px;background:#111;"></div>
<div style="left:627.00px;top:53.57px;font-size:13.5px;line-height:13.5px;color:#111;white-space:pre;transform:scaleX(0.9905);transform-origin:0 0;">Utils</div>
<div style="left:627px;top:67px;width:7px;height:1px;background:#111;"></div>
<div style="left:669.00px;top:53.57px;font-size:13.5px;line-height:13.5px;color:#111;white-space:pre;transform:scaleX(1.0250);transform-origin:0 0;">Settings</div>
<div style="left:669px;top:67px;width:7px;height:1px;background:#111;"></div>
<div style="left:1243.00px;top:53.57px;font-size:13.5px;line-height:13.5px;color:#111;white-space:pre;transform:scaleX(0.9364);transform-origin:0 0;">Help</div>
<div style="left:1243px;top:67px;width:7px;height:1px;background:#111;"></div>
<div style="left:400px;top:73px;width:570px;height:66px;background:#c4c4c4;box-shadow:inset 0 0 14px rgba(0,0,0,.10);"></div>
<div style="left:972px;top:73px;width:322px;height:66px;background:#c8c8c8;box-shadow:inset 0 0 10px rgba(0,0,0,.08);"></div>
<div style="left:970px;top:73px;width:1px;height:66px;background:#5a5a5a;"></div>
<div style="left:971px;top:73px;width:1px;height:66px;background:#f4f4f4;"></div>
<div style="left:400px;top:139px;width:894px;height:1px;background:#5a5a5a;"></div>
<div style="left:400px;top:140px;width:894px;height:1px;background:#f4f4f4;"></div>
<div style="left:400px;top:72px;width:894px;height:1px;background:#555;"></div>
<div style="left:400px;top:73px;width:894px;height:1px;background:#f0f0f0;"></div>
<div style="left:1294px;top:73px;width:19px;height:660px;background:#e0e0e0;"></div>
<div style="left:1293px;top:49px;width:1px;height:577px;background:#909090;"></div>
<div style="left:1294px;top:49px;width:1px;height:577px;background:#e6e6e6;"></div>
<div style="left:411px;top:82px;width:313px;height:47px;background:#b4f3f3;border:1px solid #6aa6a6;border-radius:5px;box-shadow:inset 1px 1px 0 #d8ffff;"></div>
<div style="left:415.00px;top:90.60px;font-size:30px;line-height:30px;color:#000;white-space:pre;transform:scaleX(1.0811);transform-origin:0 0;">number1</div>
<div style="left:741px;top:82px;width:213px;height:47px;background:#b4f3f3;border:1px solid #6aa6a6;border-radius:5px;box-shadow:inset 1px 1px 0 #d8ffff;"></div>
<div style="left:804.50px;top:91.02px;font-size:29.5px;line-height:29.5px;color:#d80000;white-space:pre;font-weight:bold;transform:scaleX(0.9487);transform-origin:0 0;">Bossa</div>
<div style="left:982px;top:83px;width:212px;height:22px;background:linear-gradient(#fafafa,#f0f0f0 60%,#e2e2e2);border:1px solid #b4b4b4;border-radius:6px;"></div>
<div style="left:982px;top:107px;width:212px;height:22px;background:linear-gradient(#fafafa,#f0f0f0 60%,#e2e2e2);border:1px solid #b4b4b4;border-radius:6px;"></div>
<div style="left:987.00px;top:87.02px;font-size:12.5px;line-height:12.5px;color:#000;white-space:pre;transform:scaleX(1.0683);transform-origin:0 0;">20 UX16 MIDI 1</div>
<div style="left:987.00px;top:111.22px;font-size:12.5px;line-height:12.5px;color:#000;white-space:pre;transform:scaleX(1.0683);transform-origin:0 0;">20 UX16 MIDI 1</div>
<div style="left:1207px;top:83px;width:70px;height:33px;background:#555;border-top:1.5px solid #000;border-left:1.5px solid #000;border-right:1px solid #f4f4f4;border-bottom:1px solid #f4f4f4;"></div>
<div style="left:1206.00px;top:103.87px;font-size:13.5px;line-height:13.5px;color:#000;white-space:pre;transform:scaleX(1.1401);transform-origin:0 0;">Midi Mode</div>
<div style="left:1206px;top:120px;width:14px;height:19px;background:#e00000;border-right:1px solid #000;border-bottom:1px solid #000;box-shadow:inset 1px 1px 0 rgba(255,255,255,.55);"></div>
<svg style="left:1209.75px;top:124.0px" width="5.5" height="10"><path d="M5.5 0 L0 5.0 L5.5 10 Z" fill="#000"/></svg>
<div style="left:1263px;top:120px;width:14px;height:19px;background:#e00000;border-right:1px solid #000;border-bottom:1px solid #000;box-shadow:inset 1px 1px 0 rgba(255,255,255,.55);"></div>
<svg style="left:1266.75px;top:124.0px" width="5.5" height="10"><path d="M0 0 L5.5 5.0 L0 10 Z" fill="#000"/></svg>
<div style="left:1220px;top:120px;width:43px;height:19px;background:#fff;border-top:1.5px solid #000;border-left:1.5px solid #000;border-bottom:1px solid #e0e0e0;"></div>
<div style="left:1238.11px;top:122.69px;font-size:14px;line-height:14px;color:#000;white-space:pre;">0</div>
<div style="left:400px;top:140px;width:100px;height:123px;background:#c2c2c2;box-shadow:inset 0 0 12px rgba(0,0,0,.10);"></div>
<div style="left:502px;top:140px;width:468px;height:123px;background:#c4c4c4;box-shadow:inset 0 0 14px rgba(0,0,0,.10);"></div>
<div style="left:972px;top:140px;width:322px;height:123px;background:#c6c6c6;box-shadow:inset 0 0 10px rgba(0,0,0,.08);"></div>
<div style="left:500px;top:140px;width:1px;height:123px;background:#5a5a5a;"></div>
<div style="left:501px;top:140px;width:1px;height:123px;background:#f4f4f4;"></div>
<div style="left:970px;top:140px;width:1px;height:123px;background:#5a5a5a;"></div>
<div style="left:971px;top:140px;width:1px;height:123px;background:#f4f4f4;"></div>
<div style="left:400px;top:263px;width:894px;height:1px;background:#5a5a5a;"></div>
<div style="left:400px;top:264px;width:894px;height:1px;background:#f4f4f4;"></div>
<div style="left:412px;top:150px;width:77px;height:61px;background:#000;border-right:1px solid #eee;border-bottom:1px solid #eee;"></div>
<div style="left:421.50px;top:164.68px;font-size:30.5px;line-height:30.5px;color:#ff0848;white-space:pre;font-weight:bold;transform:scaleX(1.1201);transform-origin:0 0;text-shadow:1px 1px 0 #ffd8e4;">001</div>
<div style="left:426.03px;top:212.42px;font-size:12.5px;line-height:12.5px;color:#999;white-space:pre;transform:scaleX(1.0640);transform-origin:50% 0;">Program</div>
<div style="left:411px;top:226px;width:15px;height:23px;background:linear-gradient(#e6e6e6,#d0d0d0);border-right:1px solid #000;border-bottom:1px solid #000;box-shadow:inset 1px 1px 0 rgba(255,255,255,.55);"></div>
<svg style="left:415.25px;top:232.0px" width="5.5" height="10"><path d="M5.5 0 L0 5.0 L5.5 10 Z" fill="#7a7a7a"/></svg>
<div style="left:474px;top:226px;width:15px;height:23px;background:linear-gradient(#e6e6e6,#d0d0d0);border-right:1px solid #000;border-bottom:1px solid #000;box-shadow:inset 1px 1px 0 rgba(255,255,255,.55);"></div>
<svg style="left:478.25px;top:232.0px" width="5.5" height="10"><path d="M0 0 L5.5 5.0 L0 10 Z" fill="#7a7a7a"/></svg>
<div style="left:426px;top:226px;width:48px;height:23px;background:#fff;border-top:1.5px solid #000;border-left:1.5px solid #000;border-bottom:1px solid #e0e0e0;"></div>
<div style="left:446.89px;top:231.17px;font-size:13px;line-height:13px;color:#000;white-space:pre;">1</div>
<div style="left:512px;top:161px;width:210px;height:88px;background:#ececec;border-top:1px solid #9a9a9a;border-left:1px solid #9a9a9a;border-radius:0 0 0 5px;box-shadow:inset 1px 1px 0 #fff;"></div>
<div style="left:513px;top:161px;width:194px;height:15px;background:#0a4b8c;"></div>
<div style="left:517.00px;top:162.72px;font-size:11.2px;line-height:11.2px;color:#fff;white-space:pre;font-weight:bold;transform:scaleX(1.1872);transform-origin:0 0;">001 - Bossa 1</div>
<div style="left:517.00px;top:176.77px;font-size:11.2px;line-height:11.2px;color:#000;white-space:pre;font-weight:bold;transform:scaleX(1.1872);transform-origin:0 0;">002 - Bossa 2</div>
<div style="left:517.00px;top:190.82px;font-size:11.2px;line-height:11.2px;color:#000;white-space:pre;font-weight:bold;transform:scaleX(1.2077);transform-origin:0 0;">003 - Bossa Intro</div>
<div style="left:517.00px;top:204.87px;font-size:11.2px;line-height:11.2px;color:#000;white-space:pre;font-weight:bold;transform:scaleX(1.2073);transform-origin:0 0;">004 - Bossa 1 Fill 1</div>
<div style="left:517.00px;top:218.92px;font-size:11.2px;line-height:11.2px;color:#000;white-space:pre;font-weight:bold;transform:scaleX(1.2073);transform-origin:0 0;">005 - Bossa 2 Fill 2</div>
<div style="left:517.00px;top:232.97px;font-size:11.2px;line-height:11.2px;color:#000;white-space:pre;font-weight:bold;transform:scaleX(1.1712);transform-origin:0 0;">006 - Bossa Ending</div>
<div style="left:707px;top:161px;width:15px;height:88px;background:#a2a2a2;"></div>
<div style="left:707px;top:161px;width:15px;height:15px;background:linear-gradient(#eaeaea,#cfcfcf);border-right:1px solid #555;border-bottom:1px solid #555;"></div>
<svg style="left:710px;top:165px" width="8" height="6"><path d="M0 6 L4.0 0 L8 6 Z" fill="#000"/></svg>
<div style="left:707px;top:177px;width:15px;height:10px;background:linear-gradient(#e6e6e6,#cacaca);border-right:1px solid #555;border-bottom:1px solid #555;"></div>
<div style="left:707px;top:233px;width:15px;height:16px;background:linear-gradient(#eaeaea,#cfcfcf);border-right:1px solid #555;border-bottom:1px solid #555;"></div>
<svg style="left:710px;top:238px" width="8" height="6"><path d="M0 0 L4.0 6 L8 0 Z" fill="#000"/></svg>
<div style="left:831.00px;top:145.42px;font-size:12.5px;line-height:12.5px;color:#8c8c8c;white-space:pre;transform:scaleX(0.9695);transform-origin:0 0;">Styles</div>
<div style="left:742px;top:161px;width:209px;height:88px;background:#ececec;border-top:1px solid #9a9a9a;border-left:1px solid #9a9a9a;border-radius:0 0 0 5px;box-shadow:inset 1px 1px 0 #fff;"></div>
<div style="left:743px;top:161px;width:193px;height:15px;background:#0a4b8c;"></div>
<div style="left:746.50px;top:162.72px;font-size:11.2px;line-height:11.2px;color:#fff;white-space:pre;font-weight:bold;transform:scaleX(1.1886);transform-origin:0 0;">001 - Bossa</div>
<div style="left:746.50px;top:176.77px;font-size:11.2px;line-height:11.2px;color:#000;white-space:pre;font-weight:bold;transform:scaleX(1.2010);transform-origin:0 0;">002 - Swing</div>
<div style="left:746.50px;top:190.82px;font-size:11.2px;line-height:11.2px;color:#000;white-space:pre;font-weight:bold;transform:scaleX(1.1972);transform-origin:0 0;">003 - Buggy</div>
<div style="left:746.50px;top:204.87px;font-size:11.2px;line-height:11.2px;color:#000;white-space:pre;font-weight:bold;transform:scaleX(1.2047);transform-origin:0 0;">004 - Dance</div>
<div style="left:746.50px;top:218.92px;font-size:11.2px;line-height:11.2px;color:#000;white-space:pre;font-weight:bold;transform:scaleX(1.1932);transform-origin:0 0;">005 - Samba</div>
<div style="left:746.50px;top:232.97px;font-size:11.2px;line-height:11.2px;color:#000;white-space:pre;font-weight:bold;transform:scaleX(1.1977);transform-origin:0 0;">006 - Techno</div>
<div style="left:936px;top:161px;width:15px;height:88px;background:#a2a2a2;"></div>
<div style="left:936px;top:161px;width:15px;height:15px;background:linear-gradient(#eaeaea,#cfcfcf);border-right:1px solid #555;border-bottom:1px solid #555;"></div>
<svg style="left:939px;top:165px" width="8" height="6"><path d="M0 6 L4.0 0 L8 6 Z" fill="#000"/></svg>
<div style="left:936px;top:177px;width:15px;height:10px;background:linear-gradient(#e6e6e6,#cacaca);border-right:1px solid #555;border-bottom:1px solid #555;"></div>
<div style="left:936px;top:233px;width:15px;height:16px;background:linear-gradient(#eaeaea,#cfcfcf);border-right:1px solid #555;border-bottom:1px solid #555;"></div>
<svg style="left:939px;top:238px" width="8" height="6"><path d="M0 0 L4.0 6 L8 0 Z" fill="#000"/></svg>
<svg style="left:984px;top:146px" width="104" height="84"><ellipse cx="51" cy="41.5" rx="47.5" ry="38.3" fill="#bcbcbc" stroke="#000" stroke-width="1.3"/><path d="M4.22 48.15 A47.5 38.3 0 1 0 96.88 31.59" fill="none" stroke="#000" stroke-width="2.4"/><path d="M5.87 38.35 A45.3 36.099999999999994 0 0 1 66.49 7.58" fill="none" stroke="#e4e4e4" stroke-width="1.4"/><ellipse cx="26.5" cy="47" rx="7" ry="5.5" fill="#555"/></svg>
<div style="left:1116.00px;top:140.92px;font-size:12.5px;line-height:12.5px;color:#999;white-space:pre;transform:scaleX(0.8740);transform-origin:0 0;">Tempo</div>
<div style="left:1094px;top:154px;width:15px;height:19px;background:linear-gradient(#e6e6e6,#d0d0d0);border-right:1px solid #000;border-bottom:1px solid #000;box-shadow:inset 1px 1px 0 rgba(255,255,255,.55);"></div>
<svg style="left:1098.25px;top:158.0px" width="5.5" height="10"><path d="M5.5 0 L0 5.0 L5.5 10 Z" fill="#7a7a7a"/></svg>
<div style="left:1157px;top:154px;width:15px;height:19px;background:linear-gradient(#e6e6e6,#d0d0d0);border-right:1px solid #000;border-bottom:1px solid #000;box-shadow:inset 1px 1px 0 rgba(255,255,255,.55);"></div>
<svg style="left:1161.25px;top:158.0px" width="5.5" height="10"><path d="M0 0 L5.5 5.0 L0 10 Z" fill="#7a7a7a"/></svg>
<div style="left:1109px;top:154px;width:48px;height:19px;background:#fff;border-top:1.5px solid #000;border-left:1.5px solid #000;border-bottom:1px solid #e0e0e0;"></div>
<div style="left:1127.38px;top:158.15px;font-size:11px;line-height:11px;color:#000;white-space:pre;">80</div>
<div style="left:1202.00px;top:140.92px;font-size:12.5px;line-height:12.5px;color:#999;white-space:pre;transform:scaleX(0.9821);transform-origin:0 0;">Transpose</div>
<div style="left:1183px;top:154px;width:19px;height:19px;background:linear-gradient(#e6e6e6,#d0d0d0);border-right:1px solid #000;border-bottom:1px solid #000;box-shadow:inset 1px 1px 0 rgba(255,255,255,.55);"></div>
<svg style="left:1189.25px;top:158.0px" width="5.5" height="10"><path d="M5.5 0 L0 5.0 L5.5 10 Z" fill="#7a7a7a"/></svg>
<div style="left:1259px;top:154px;width:19px;height:19px;background:linear-gradient(#e6e6e6,#d0d0d0);border-right:1px solid #000;border-bottom:1px solid #000;box-shadow:inset 1px 1px 0 rgba(255,255,255,.55);"></div>
<svg style="left:1265.25px;top:158.0px" width="5.5" height="10"><path d="M0 0 L5.5 5.0 L0 10 Z" fill="#7a7a7a"/></svg>
<div style="left:1202px;top:154px;width:57px;height:19px;background:#fff;border-top:1.5px solid #000;border-left:1.5px solid #000;border-bottom:1px solid #e0e0e0;"></div>
<div style="left:1227.66px;top:157.66px;font-size:12px;line-height:12px;color:#000;white-space:pre;">0</div>
<div style="left:1095px;top:179px;width:77px;height:36px;background:#000;border-right:2px solid #f4f4f4;border-bottom:2px solid #f4f4f4;"></div>
<div style="left:1106.40px;top:180.68px;font-size:30.5px;line-height:30.5px;color:#ff0848;white-space:pre;font-weight:bold;transform:scaleX(1.0612);transform-origin:0 0;text-shadow:1px 1px 0 #ffd8e4;">080</div>
<div style="left:1178px;top:188px;width:95px;height:14px;background:#bcbcbc;border:1px solid #fafafa;border-top-color:#444;border-left-color:#555;"></div>
<div style="left:1183px;top:190px;width:20px;height:10px;background:#840008;"></div>
<div style="left:1205px;top:190px;width:20px;height:10px;background:#00f800;"></div>
<div style="left:1226px;top:190px;width:20px;height:10px;background:#006e00;"></div>
<div style="left:1247px;top:190px;width:20px;height:10px;background:#006e00;"></div>
<div style="left:977px;top:237px;width:60px;height:20px;background:linear-gradient(#e2e2e2,#d2d2d2 50%,#c8c8c8 55%,#d0d0d0);border:1px solid #a8a8a8;border-radius:4px;"></div>
<div style="left:994.14px;top:240.92px;font-size:12.5px;line-height:12.5px;color:#7a7aa8;white-space:pre;font-weight:bold;transform:scaleX(0.9333);transform-origin:50% 0;">Play</div>
<div style="left:1049px;top:237px;width:61px;height:20px;background:linear-gradient(#ecd8dc,#e2c6cc 50%,#dcbcc2 55%,#e2c4ca);border:1px solid #c0a0a6;border-radius:4px;"></div>
<div style="left:1057.97px;top:240.92px;font-size:12.5px;line-height:12.5px;color:#8a7a7a;white-space:pre;font-weight:bold;transform:scaleX(0.9288);transform-origin:50% 0;">Record</div>
<div style="left:1116px;top:227px;width:56px;height:31px;background:#000;border-right:2px solid #f4f4f4;border-bottom:2px solid #f4f4f4;"></div>
<div style="left:1131.00px;top:231.64px;font-size:20.5px;line-height:20.5px;color:#f8084a;white-space:pre;font-weight:bold;transform:scaleX(1.1402);transform-origin:0 0;">25</div>
<div style="left:1183px;top:216px;width:97px;height:42px;background:linear-gradient(#f8f8cc,#f4f2bc 50%,#eeeca8 60%,#f2f0b6);border:1px solid #b8b878;border-radius:5px;"></div>
<div style="left:1188px;top:221px;width:87px;height:32px;border:1px dotted #000;"></div>
<div style="left:1199.60px;top:230.57px;font-size:13.5px;line-height:13.5px;color:#1a1aa8;white-space:pre;font-weight:bold;transform:scaleX(0.9457);transform-origin:0 0;">Start/Stop</div>
<div style="left:400px;top:265px;width:302px;height:468px;background:#dcdcdc;"></div>
<div style="left:702px;top:265px;width:592px;height:361px;background:#dcdcdc;"></div>
<div style="left:400px;top:270px;width:34px;height:23px;background:linear-gradient(#f8f8cc,#f4f2bc 50%,#eeeca8 60%,#f2f0b6);border:1px solid #b8b878;border-radius:5px;"></div>
<div style="left:407.50px;top:275.17px;font-size:13px;line-height:13px;color:#1a1ab0;white-space:pre;font-weight:bold;transform:scaleX(0.9417);transform-origin:0 0;">On</div>
<div style="left:400px;top:312px;width:13px;height:15px;background:#00e000;border-right:1px solid #000;border-bottom:1px solid #000;box-shadow:inset 1px 1px 0 rgba(255,255,255,.55);"></div>
<svg style="left:403.8px;top:315.0px" width="4.4" height="8"><path d="M4.4 0 L0 4.0 L4.4 8 Z" fill="#000"/></svg>
<div style="left:454px;top:312px;width:13px;height:15px;background:#00e000;border-right:1px solid #000;border-bottom:1px solid #000;box-shadow:inset 1px 1px 0 rgba(255,255,255,.55);"></div>
<svg style="left:457.8px;top:315.0px" width="4.4" height="8"><path d="M0 0 L4.4 4.0 L0 8 Z" fill="#000"/></svg>
<div style="left:413px;top:312px;width:41px;height:15px;background:#fff;border-top:1.5px solid #000;border-left:1.5px solid #000;border-bottom:1px solid #e0e0e0;"></div>
<div style="left:429.97px;top:312.44px;font-size:14.5px;line-height:14.5px;color:#000;white-space:pre;">0</div>
<div style="left:400px;top:345px;width:13px;height:15px;background:#00e000;border-right:1px solid #000;border-bottom:1px solid #000;box-shadow:inset 1px 1px 0 rgba(255,255,255,.55);"></div>
<svg style="left:403.8px;top:348.0px" width="4.4" height="8"><path d="M4.4 0 L0 4.0 L4.4 8 Z" fill="#000"/></svg>
<div style="left:454px;top:345px;width:13px;height:15px;background:#00e000;border-right:1px solid #000;border-bottom:1px solid #000;box-shadow:inset 1px 1px 0 rgba(255,255,255,.55);"></div>
<svg style="left:457.8px;top:348.0px" width="4.4" height="8"><path d="M0 0 L4.4 4.0 L0 8 Z" fill="#000"/></svg>
<div style="left:413px;top:345px;width:41px;height:15px;background:#fff;border-top:1.5px solid #000;border-left:1.5px solid #000;border-bottom:1px solid #e0e0e0;"></div>
<div style="left:421.90px;top:345.44px;font-size:14.5px;line-height:14.5px;color:#000;white-space:pre;">199</div>
<div style="left:406px;top:365px;width:28px;height:152px;background:linear-gradient(90deg,#9a9a9a,#bcbcbc 25%,#c8c8c8 50%,#b4b4b4 80%,#8e8e8e);border:1px solid #858585;border-radius:6px;"></div>
<div style="left:418.75px;top:367px;width:2.5px;height:148px;background:#000;"></div>
<div style="left:408px;top:391px;width:24px;height:16px;background:linear-gradient(#f0f0f0,#dcdcdc 32%,#b8481a 32%,#b8481a 60%,#f0e4d4 60%,#f2f2f2 78%,#c4c4c4);border:1px solid #9c9c9c;border-radius:3px;"></div>
<div style="left:444.88px;top:379.42px;font-size:12.5px;line-height:12.5px;color:#a2a2a2;white-space:pre;transform:scaleX(0.9892);transform-origin:50% 0;">Pan</div>
<div style="left:445px;top:366px;width:22px;height:16px;background:linear-gradient(#f6f6f6,#e2e2e2 50%,#d2d2d2);border:1px solid #b8b8b8;border-radius:3px;"></div>
<div style="left:450.5px;top:372.8px;width:11px;height:2.6px;background:#1818c8;"></div>
<div style="left:454.7px;top:368.5px;width:2.6px;height:11px;background:#1818c8;"></div>
<svg style="left:437.2px;top:391.2px" width="37.6" height="32"><ellipse cx="18.8" cy="16" rx="16.8" ry="14" fill="#a9a9a9" stroke="#000" stroke-width="1.2"/><path d="M2.57 19.62 A16.8 14 0 0 0 35.03 19.62" fill="none" stroke="#000" stroke-width="2"/><path d="M4.50 12.89 A14.8 12 0 0 1 26.20 5.61" fill="none" stroke="#d2d2d2" stroke-width="1.2"/><circle cx="13.5" cy="11.8" r="1.9" fill="#e8e830" stroke="#333" stroke-width=".8"/></svg>
<div style="left:435.85px;top:422.92px;font-size:12.5px;line-height:12.5px;color:#a2a2a2;white-space:pre;transform:scaleX(0.9927);transform-origin:50% 0;">Reverb</div>
<svg style="left:437.2px;top:434.1px" width="37.6" height="32"><ellipse cx="18.8" cy="16" rx="16.8" ry="14" fill="#a9a9a9" stroke="#000" stroke-width="1.2"/><path d="M2.57 19.62 A16.8 14 0 0 0 35.03 19.62" fill="none" stroke="#000" stroke-width="2"/><path d="M4.50 12.89 A14.8 12 0 0 1 26.20 5.61" fill="none" stroke="#d2d2d2" stroke-width="1.2"/><path d="M12.3 20.5 L19.3 15" stroke="#000" stroke-width="1.5" stroke-linecap="round"/></svg>
<div style="left:435.85px;top:470.92px;font-size:12.5px;line-height:12.5px;color:#a2a2a2;white-space:pre;transform:scaleX(0.9927);transform-origin:50% 0;">Chorus</div>
<svg style="left:437.2px;top:482.1px" width="37.6" height="32"><ellipse cx="18.8" cy="16" rx="16.8" ry="14" fill="#a9a9a9" stroke="#000" stroke-width="1.2"/><path d="M2.57 19.62 A16.8 14 0 0 0 35.03 19.62" fill="none" stroke="#000" stroke-width="2"/><path d="M4.50 12.89 A14.8 12 0 0 1 26.20 5.61" fill="none" stroke="#d2d2d2" stroke-width="1.2"/><path d="M12.3 20.5 L19.3 15" stroke="#000" stroke-width="1.5" stroke-linecap="round"/></svg>
<div style="left:411.80px;top:519.89px;font-size:14.3px;line-height:14.3px;color:#111;white-space:pre;transform:scaleX(1.0560);transform-origin:50% 0;">MchV1</div>
<div style="left:400.6px;top:536px;width:13px;height:18px;background:#0000d0;border-right:1px solid #000;border-bottom:1px solid #000;box-shadow:inset 1px 1px 0 rgba(255,255,255,.55);"></div>
<svg style="left:403.85px;top:539.5px" width="5.5" height="10"><path d="M5.5 0 L0 5.0 L5.5 10 Z" fill="#000"/></svg>
<div style="left:453.5px;top:536px;width:13px;height:18px;background:#0000d0;border-right:1px solid #000;border-bottom:1px solid #000;box-shadow:inset 1px 1px 0 rgba(255,255,255,.55);"></div>
<svg style="left:456.75px;top:539.5px" width="5.5" height="10"><path d="M0 0 L5.5 5.0 L0 10 Z" fill="#000"/></svg>
<div style="left:413.6px;top:536px;width:39.89999999999998px;height:18px;background:#fff;border-top:1.5px solid #000;border-left:1.5px solid #000;border-bottom:1px solid #e0e0e0;"></div>
<div style="left:430.02px;top:537.94px;font-size:14.5px;line-height:14.5px;color:#000;white-space:pre;">0</div>
<div style="left:410.90px;top:553.39px;font-size:14.3px;line-height:14.3px;color:#111;white-space:pre;transform:scaleX(1.0594);transform-origin:50% 0;">v1 Low</div>
<div style="left:400.6px;top:570px;width:13px;height:14px;background:#e000a8;border-right:1px solid #000;border-bottom:1px solid #000;box-shadow:inset 1px 1px 0 rgba(255,255,255,.55);"></div>
<svg style="left:404.675px;top:573.0px" width="3.8500000000000005" height="7"><path d="M3.8500000000000005 0 L0 3.5 L3.8500000000000005 7 Z" fill="#000"/></svg>
<div style="left:453.5px;top:570px;width:13px;height:14px;background:#e000a8;border-right:1px solid #000;border-bottom:1px solid #000;box-shadow:inset 1px 1px 0 rgba(255,255,255,.55);"></div>
<svg style="left:457.575px;top:573.0px" width="3.8500000000000005" height="7"><path d="M0 0 L3.8500000000000005 3.5 L0 7 Z" fill="#000"/></svg>
<div style="left:413.6px;top:570px;width:39.89999999999998px;height:14px;background:#fff;border-top:1.5px solid #000;border-left:1.5px solid #000;border-bottom:1px solid #e0e0e0;"></div>
<div style="left:430.02px;top:569.94px;font-size:14.5px;line-height:14.5px;color:#000;white-space:pre;">0</div>
<div style="left:409.31px;top:591.89px;font-size:14.3px;line-height:14.3px;color:#111;white-space:pre;transform:scaleX(1.0931);transform-origin:50% 0;">v1 High</div>
<div style="left:400.6px;top:608.6px;width:13px;height:13.899999999999977px;background:#e000a8;border-right:1px solid #000;border-bottom:1px solid #000;box-shadow:inset 1px 1px 0 rgba(255,255,255,.55);"></div>
<svg style="left:404.70250000000004px;top:611.6px" width="3.794999999999988" height="6.899999999999977"><path d="M3.794999999999988 0 L0 3.4499999999999886 L3.794999999999988 6.899999999999977 Z" fill="#000"/></svg>
<div style="left:453.5px;top:608.6px;width:13px;height:13.899999999999977px;background:#e000a8;border-right:1px solid #000;border-bottom:1px solid #000;box-shadow:inset 1px 1px 0 rgba(255,255,255,.55);"></div>
<svg style="left:457.6025px;top:611.6px" width="3.794999999999988" height="6.899999999999977"><path d="M0 0 L3.794999999999988 3.4499999999999886 L0 6.899999999999977 Z" fill="#000"/></svg>
<div style="left:413.6px;top:608.6px;width:39.89999999999998px;height:13.899999999999977px;background:#fff;border-top:1.5px solid #000;border-left:1.5px solid #000;border-bottom:1px solid #e0e0e0;"></div>
<div style="left:425.99px;top:608.49px;font-size:14.5px;line-height:14.5px;color:#2020c0;white-space:pre;">60</div>
<div style="left:400px;top:633.5px;width:66.5px;height:21.799999999999955px;background:linear-gradient(#e6fbcf,#d4f4b0 50%,#c6ec9a 55%,#d2f2ae);border:1px solid #8cb46c;border-radius:6px;"></div>
<div style="left:404.76px;top:638.32px;font-size:12.5px;line-height:12.5px;color:#111;white-space:pre;transform:scaleX(1.0177);transform-origin:50% 0;">Vibraphon</div>
<div style="left:409.28px;top:655.92px;font-size:12.5px;line-height:12.5px;color:#a2a2a2;white-space:pre;">Program</div>
<div style="left:400px;top:670px;width:13px;height:16.5px;background:linear-gradient(#e6e6e6,#d0d0d0);border-right:1px solid #000;border-bottom:1px solid #000;box-shadow:inset 1px 1px 0 rgba(255,255,255,.55);"></div>
<svg style="left:403.3875px;top:673.0px" width="5.2250000000000005" height="9.5"><path d="M5.2250000000000005 0 L0 4.75 L5.2250000000000005 9.5 Z" fill="#7a7a7a"/></svg>
<div style="left:453.5px;top:670px;width:13px;height:16.5px;background:linear-gradient(#e6e6e6,#d0d0d0);border-right:1px solid #000;border-bottom:1px solid #000;box-shadow:inset 1px 1px 0 rgba(255,255,255,.55);"></div>
<svg style="left:456.8875px;top:673.0px" width="5.2250000000000005" height="9.5"><path d="M0 0 L5.2250000000000005 4.75 L0 9.5 Z" fill="#7a7a7a"/></svg>
<div style="left:413px;top:670px;width:40.5px;height:16.5px;background:#fff;border-top:1.5px solid #000;border-left:1.5px solid #000;border-bottom:1px solid #e0e0e0;"></div>
<div style="left:425.69px;top:671.19px;font-size:14.5px;line-height:14.5px;color:#000;white-space:pre;">11</div>
<div style="left:478px;top:270px;width:34px;height:23px;background:linear-gradient(#f8f8cc,#f4f2bc 50%,#eeeca8 60%,#f2f0b6);border:1px solid #b8b878;border-radius:5px;"></div>
<div style="left:485.50px;top:275.17px;font-size:13px;line-height:13px;color:#1a1ab0;white-space:pre;font-weight:bold;transform:scaleX(0.9417);transform-origin:0 0;">On</div>
<div style="left:478px;top:312px;width:13px;height:15px;background:#00e000;border-right:1px solid #000;border-bottom:1px solid #000;box-shadow:inset 1px 1px 0 rgba(255,255,255,.55);"></div>
<svg style="left:481.8px;top:315.0px" width="4.4" height="8"><path d="M4.4 0 L0 4.0 L4.4 8 Z" fill="#000"/></svg>
<div style="left:532px;top:312px;width:13px;height:15px;background:#00e000;border-right:1px solid #000;border-bottom:1px solid #000;box-shadow:inset 1px 1px 0 rgba(255,255,255,.55);"></div>
<svg style="left:535.8px;top:315.0px" width="4.4" height="8"><path d="M0 0 L4.4 4.0 L0 8 Z" fill="#000"/></svg>
<div style="left:491px;top:312px;width:41px;height:15px;background:#fff;border-top:1.5px solid #000;border-left:1.5px solid #000;border-bottom:1px solid #e0e0e0;"></div>
<div style="left:507.97px;top:312.44px;font-size:14.5px;line-height:14.5px;color:#000;white-space:pre;">0</div>
<div style="left:478px;top:345px;width:13px;height:15px;background:#00e000;border-right:1px solid #000;border-bottom:1px solid #000;box-shadow:inset 1px 1px 0 rgba(255,255,255,.55);"></div>
<svg style="left:481.8px;top:348.0px" width="4.4" height="8"><path d="M4.4 0 L0 4.0 L4.4 8 Z" fill="#000"/></svg>
<div style="left:532px;top:345px;width:13px;height:15px;background:#00e000;border-right:1px solid #000;border-bottom:1px solid #000;box-shadow:inset 1px 1px 0 rgba(255,255,255,.55);"></div>
<svg style="left:535.8px;top:348.0px" width="4.4" height="8"><path d="M0 0 L4.4 4.0 L0 8 Z" fill="#000"/></svg>
<div style="left:491px;top:345px;width:41px;height:15px;background:#fff;border-top:1.5px solid #000;border-left:1.5px solid #000;border-bottom:1px solid #e0e0e0;"></div>
<div style="left:499.90px;top:345.44px;font-size:14.5px;line-height:14.5px;color:#000;white-space:pre;">199</div>
<div style="left:478px;top:365px;width:28px;height:152px;background:linear-gradient(90deg,#9a9a9a,#bcbcbc 25%,#c8c8c8 50%,#b4b4b4 80%,#8e8e8e);border:1px solid #858585;border-radius:6px;"></div>
<div style="left:490.75px;top:367px;width:2.5px;height:148px;background:#000;"></div>
<div style="left:480px;top:416px;width:24px;height:16px;background:linear-gradient(#f0f0f0,#dcdcdc 32%,#b8481a 32%,#b8481a 60%,#f0e4d4 60%,#f2f2f2 78%,#c4c4c4);border:1px solid #9c9c9c;border-radius:3px;"></div>
<div style="left:516.88px;top:379.42px;font-size:12.5px;line-height:12.5px;color:#a2a2a2;white-space:pre;transform:scaleX(0.9892);transform-origin:50% 0;">Pan</div>
<div style="left:517px;top:366px;width:22px;height:16px;background:linear-gradient(#f6f6f6,#e2e2e2 50%,#d2d2d2);border:1px solid #b8b8b8;border-radius:3px;"></div>
<div style="left:522.5px;top:372.8px;width:11px;height:2.6px;background:#1818c8;"></div>
<div style="left:526.7px;top:368.5px;width:2.6px;height:11px;background:#1818c8;"></div>
<svg style="left:509.59999999999997px;top:391.2px" width="37.6" height="32"><ellipse cx="18.8" cy="16" rx="16.8" ry="14" fill="#a9a9a9" stroke="#000" stroke-width="1.2"/><path d="M2.57 19.62 A16.8 14 0 0 0 35.03 19.62" fill="none" stroke="#000" stroke-width="2"/><path d="M4.50 12.89 A14.8 12 0 0 1 26.20 5.61" fill="none" stroke="#d2d2d2" stroke-width="1.2"/><circle cx="18.8" cy="10" r="1.9" fill="#e8e830" stroke="#333" stroke-width=".8"/></svg>
<div style="left:508.25px;top:422.92px;font-size:12.5px;line-height:12.5px;color:#a2a2a2;white-space:pre;transform:scaleX(0.9927);transform-origin:50% 0;">Reverb</div>
<svg style="left:509.59999999999997px;top:434.1px" width="37.6" height="32"><ellipse cx="18.8" cy="16" rx="16.8" ry="14" fill="#a9a9a9" stroke="#000" stroke-width="1.2"/><path d="M2.57 19.62 A16.8 14 0 0 0 35.03 19.62" fill="none" stroke="#000" stroke-width="2"/><path d="M4.50 12.89 A14.8 12 0 0 1 26.20 5.61" fill="none" stroke="#d2d2d2" stroke-width="1.2"/><path d="M12.3 20.5 L19.3 15" stroke="#000" stroke-width="1.5" stroke-linecap="round"/></svg>
<div style="left:508.25px;top:470.92px;font-size:12.5px;line-height:12.5px;color:#a2a2a2;white-space:pre;transform:scaleX(0.9927);transform-origin:50% 0;">Chorus</div>
<svg style="left:509.59999999999997px;top:482.1px" width="37.6" height="32"><ellipse cx="18.8" cy="16" rx="16.8" ry="14" fill="#a9a9a9" stroke="#000" stroke-width="1.2"/><path d="M2.57 19.62 A16.8 14 0 0 0 35.03 19.62" fill="none" stroke="#000" stroke-width="2"/><path d="M4.50 12.89 A14.8 12 0 0 1 26.20 5.61" fill="none" stroke="#d2d2d2" stroke-width="1.2"/><path d="M12.3 20.5 L19.3 15" stroke="#000" stroke-width="1.5" stroke-linecap="round"/></svg>
<div style="left:490.54px;top:519.89px;font-size:14.3px;line-height:14.3px;color:#111;white-space:pre;transform:scaleX(1.0484);transform-origin:50% 0;">MchL2</div>
<div style="left:478px;top:536px;width:13px;height:18px;background:#0000d0;border-right:1px solid #000;border-bottom:1px solid #000;box-shadow:inset 1px 1px 0 rgba(255,255,255,.55);"></div>
<svg style="left:481.25px;top:539.5px" width="5.5" height="10"><path d="M5.5 0 L0 5.0 L5.5 10 Z" fill="#000"/></svg>
<div style="left:532px;top:536px;width:13px;height:18px;background:#0000d0;border-right:1px solid #000;border-bottom:1px solid #000;box-shadow:inset 1px 1px 0 rgba(255,255,255,.55);"></div>
<svg style="left:535.25px;top:539.5px" width="5.5" height="10"><path d="M0 0 L5.5 5.0 L0 10 Z" fill="#000"/></svg>
<div style="left:491px;top:536px;width:41px;height:18px;background:#fff;border-top:1.5px solid #000;border-left:1.5px solid #000;border-bottom:1px solid #e0e0e0;"></div>
<div style="left:507.97px;top:537.94px;font-size:14.5px;line-height:14.5px;color:#000;white-space:pre;">1</div>
<div style="left:488.85px;top:553.39px;font-size:14.3px;line-height:14.3px;color:#111;white-space:pre;transform:scaleX(1.0594);transform-origin:50% 0;">v2 Low</div>
<div style="left:478px;top:570px;width:13px;height:14px;background:#e000a8;border-right:1px solid #000;border-bottom:1px solid #000;box-shadow:inset 1px 1px 0 rgba(255,255,255,.55);"></div>
<svg style="left:482.075px;top:573.0px" width="3.8500000000000005" height="7"><path d="M3.8500000000000005 0 L0 3.5 L3.8500000000000005 7 Z" fill="#000"/></svg>
<div style="left:532px;top:570px;width:13px;height:14px;background:#e000a8;border-right:1px solid #000;border-bottom:1px solid #000;box-shadow:inset 1px 1px 0 rgba(255,255,255,.55);"></div>
<svg style="left:536.075px;top:573.0px" width="3.8500000000000005" height="7"><path d="M0 0 L3.8500000000000005 3.5 L0 7 Z" fill="#000"/></svg>
<div style="left:491px;top:570px;width:41px;height:14px;background:#fff;border-top:1.5px solid #000;border-left:1.5px solid #000;border-bottom:1px solid #e0e0e0;"></div>
<div style="left:507.97px;top:569.94px;font-size:14.5px;line-height:14.5px;color:#000;white-space:pre;">0</div>
<div style="left:487.26px;top:591.89px;font-size:14.3px;line-height:14.3px;color:#111;white-space:pre;transform:scaleX(1.0931);transform-origin:50% 0;">v2 High</div>
<div style="left:478px;top:608.6px;width:13px;height:13.899999999999977px;background:#e000a8;border-right:1px solid #000;border-bottom:1px solid #000;box-shadow:inset 1px 1px 0 rgba(255,255,255,.55);"></div>
<svg style="left:482.1025px;top:611.6px" width="3.794999999999988" height="6.899999999999977"><path d="M3.794999999999988 0 L0 3.4499999999999886 L3.794999999999988 6.899999999999977 Z" fill="#000"/></svg>
<div style="left:532px;top:608.6px;width:13px;height:13.899999999999977px;background:#e000a8;border-right:1px solid #000;border-bottom:1px solid #000;box-shadow:inset 1px 1px 0 rgba(255,255,255,.55);"></div>
<svg style="left:536.1025px;top:611.6px" width="3.794999999999988" height="6.899999999999977"><path d="M0 0 L3.794999999999988 3.4499999999999886 L0 6.899999999999977 Z" fill="#000"/></svg>
<div style="left:491px;top:608.6px;width:41px;height:13.899999999999977px;background:#fff;border-top:1.5px solid #000;border-left:1.5px solid #000;border-bottom:1px solid #e0e0e0;"></div>
<div style="left:503.94px;top:608.49px;font-size:14.5px;line-height:14.5px;color:#000;white-space:pre;">60</div>
<div style="left:478px;top:633.5px;width:67px;height:21.799999999999955px;background:linear-gradient(#e6fbcf,#d4f4b0 50%,#c6ec9a 55%,#d2f2ae);border:1px solid #8cb46c;border-radius:6px;"></div>
<div style="left:483.01px;top:638.32px;font-size:12.5px;line-height:12.5px;color:#111;white-space:pre;">Bright Piai</div>
<div style="left:487.53px;top:655.92px;font-size:12.5px;line-height:12.5px;color:#a2a2a2;white-space:pre;">Program</div>
<div style="left:478px;top:670px;width:13px;height:16.5px;background:linear-gradient(#e6e6e6,#d0d0d0);border-right:1px solid #000;border-bottom:1px solid #000;box-shadow:inset 1px 1px 0 rgba(255,255,255,.55);"></div>
<svg style="left:481.3875px;top:673.0px" width="5.2250000000000005" height="9.5"><path d="M5.2250000000000005 0 L0 4.75 L5.2250000000000005 9.5 Z" fill="#7a7a7a"/></svg>
<div style="left:532px;top:670px;width:13px;height:16.5px;background:linear-gradient(#e6e6e6,#d0d0d0);border-right:1px solid #000;border-bottom:1px solid #000;box-shadow:inset 1px 1px 0 rgba(255,255,255,.55);"></div>
<svg style="left:535.3875px;top:673.0px" width="5.2250000000000005" height="9.5"><path d="M0 0 L5.2250000000000005 4.75 L0 9.5 Z" fill="#7a7a7a"/></svg>
<div style="left:491px;top:670px;width:41px;height:16.5px;background:#fff;border-top:1.5px solid #000;border-left:1.5px solid #000;border-bottom:1px solid #e0e0e0;"></div>
<div style="left:507.97px;top:671.19px;font-size:14.5px;line-height:14.5px;color:#000;white-space:pre;">1</div>
<div style="left:557px;top:270px;width:33px;height:23px;background:linear-gradient(#f8f8cc,#f4f2bc 50%,#eeeca8 60%,#f2f0b6);border:1px solid #b8b878;border-radius:5px;"></div>
<div style="left:564.50px;top:275.17px;font-size:13px;line-height:13px;color:#1a1ab0;white-space:pre;font-weight:bold;transform:scaleX(0.9417);transform-origin:0 0;">On</div>
<div style="left:557px;top:312px;width:13px;height:15px;background:#00e000;border-right:1px solid #000;border-bottom:1px solid #000;box-shadow:inset 1px 1px 0 rgba(255,255,255,.55);"></div>
<svg style="left:560.8px;top:315.0px" width="4.4" height="8"><path d="M4.4 0 L0 4.0 L4.4 8 Z" fill="#000"/></svg>
<div style="left:611px;top:312px;width:13px;height:15px;background:#00e000;border-right:1px solid #000;border-bottom:1px solid #000;box-shadow:inset 1px 1px 0 rgba(255,255,255,.55);"></div>
<svg style="left:614.8px;top:315.0px" width="4.4" height="8"><path d="M0 0 L4.4 4.0 L0 8 Z" fill="#000"/></svg>
<div style="left:570px;top:312px;width:41px;height:15px;background:#fff;border-top:1.5px solid #000;border-left:1.5px solid #000;border-bottom:1px solid #e0e0e0;"></div>
<div style="left:586.97px;top:312.44px;font-size:14.5px;line-height:14.5px;color:#000;white-space:pre;">0</div>
<div style="left:557px;top:345px;width:13px;height:15px;background:#00e000;border-right:1px solid #000;border-bottom:1px solid #000;box-shadow:inset 1px 1px 0 rgba(255,255,255,.55);"></div>
<svg style="left:560.8px;top:348.0px" width="4.4" height="8"><path d="M4.4 0 L0 4.0 L4.4 8 Z" fill="#000"/></svg>
<div style="left:611px;top:345px;width:13px;height:15px;background:#00e000;border-right:1px solid #000;border-bottom:1px solid #000;box-shadow:inset 1px 1px 0 rgba(255,255,255,.55);"></div>
<svg style="left:614.8px;top:348.0px" width="4.4" height="8"><path d="M0 0 L4.4 4.0 L0 8 Z" fill="#000"/></svg>
<div style="left:570px;top:345px;width:41px;height:15px;background:#fff;border-top:1.5px solid #000;border-left:1.5px solid #000;border-bottom:1px solid #e0e0e0;"></div>
<div style="left:578.90px;top:345.44px;font-size:14.5px;line-height:14.5px;color:#000;white-space:pre;">199</div>
<div style="left:557px;top:365px;width:28px;height:152px;background:linear-gradient(90deg,#9a9a9a,#bcbcbc 25%,#c8c8c8 50%,#b4b4b4 80%,#8e8e8e);border:1px solid #858585;border-radius:6px;"></div>
<div style="left:569.75px;top:367px;width:2.5px;height:148px;background:#000;"></div>
<div style="left:559px;top:390px;width:24px;height:16px;background:linear-gradient(#f0f0f0,#dcdcdc 32%,#b8481a 32%,#b8481a 60%,#f0e4d4 60%,#f2f2f2 78%,#c4c4c4);border:1px solid #9c9c9c;border-radius:3px;"></div>
<div style="left:595.88px;top:379.42px;font-size:12.5px;line-height:12.5px;color:#a2a2a2;white-space:pre;transform:scaleX(0.9892);transform-origin:50% 0;">Pan</div>
<div style="left:596px;top:366px;width:22px;height:16px;background:linear-gradient(#f6f6f6,#e2e2e2 50%,#d2d2d2);border:1px solid #b8b8b8;border-radius:3px;"></div>
<div style="left:601.5px;top:372.8px;width:11px;height:2.6px;background:#1818c8;"></div>
<div style="left:605.7px;top:368.5px;width:2.6px;height:11px;background:#1818c8;"></div>
<svg style="left:588.2px;top:391.2px" width="37.6" height="32"><ellipse cx="18.8" cy="16" rx="16.8" ry="14" fill="#a9a9a9" stroke="#000" stroke-width="1.2"/><path d="M2.57 19.62 A16.8 14 0 0 0 35.03 19.62" fill="none" stroke="#000" stroke-width="2"/><path d="M4.50 12.89 A14.8 12 0 0 1 26.20 5.61" fill="none" stroke="#d2d2d2" stroke-width="1.2"/><circle cx="24.8" cy="12.7" r="1.9" fill="#e8e830" stroke="#333" stroke-width=".8"/></svg>
<div style="left:586.85px;top:422.92px;font-size:12.5px;line-height:12.5px;color:#a2a2a2;white-space:pre;transform:scaleX(0.9927);transform-origin:50% 0;">Reverb</div>
<svg style="left:588.2px;top:434.1px" width="37.6" height="32"><ellipse cx="18.8" cy="16" rx="16.8" ry="14" fill="#a9a9a9" stroke="#000" stroke-width="1.2"/><path d="M2.57 19.62 A16.8 14 0 0 0 35.03 19.62" fill="none" stroke="#000" stroke-width="2"/><path d="M4.50 12.89 A14.8 12 0 0 1 26.20 5.61" fill="none" stroke="#d2d2d2" stroke-width="1.2"/><path d="M12.3 20.5 L19.3 15" stroke="#000" stroke-width="1.5" stroke-linecap="round"/></svg>
<div style="left:586.85px;top:470.92px;font-size:12.5px;line-height:12.5px;color:#a2a2a2;white-space:pre;transform:scaleX(0.9927);transform-origin:50% 0;">Chorus</div>
<svg style="left:588.2px;top:482.1px" width="37.6" height="32"><ellipse cx="18.8" cy="16" rx="16.8" ry="14" fill="#a9a9a9" stroke="#000" stroke-width="1.2"/><path d="M2.57 19.62 A16.8 14 0 0 0 35.03 19.62" fill="none" stroke="#000" stroke-width="2"/><path d="M4.50 12.89 A14.8 12 0 0 1 26.20 5.61" fill="none" stroke="#d2d2d2" stroke-width="1.2"/><path d="M12.3 20.5 L19.3 15" stroke="#000" stroke-width="1.5" stroke-linecap="round"/></svg>
<div style="left:566.25px;top:519.89px;font-size:14.3px;line-height:14.3px;color:#111;white-space:pre;transform:scaleX(1.0560);transform-origin:50% 0;">MchV3</div>
<div style="left:554px;top:536px;width:13px;height:18px;background:#0000d0;border-right:1px solid #000;border-bottom:1px solid #000;box-shadow:inset 1px 1px 0 rgba(255,255,255,.55);"></div>
<svg style="left:557.25px;top:539.5px" width="5.5" height="10"><path d="M5.5 0 L0 5.0 L5.5 10 Z" fill="#000"/></svg>
<div style="left:609px;top:536px;width:13px;height:18px;background:#0000d0;border-right:1px solid #000;border-bottom:1px solid #000;box-shadow:inset 1px 1px 0 rgba(255,255,255,.55);"></div>
<svg style="left:612.25px;top:539.5px" width="5.5" height="10"><path d="M0 0 L5.5 5.0 L0 10 Z" fill="#000"/></svg>
<div style="left:567px;top:536px;width:42px;height:18px;background:#fff;border-top:1.5px solid #000;border-left:1.5px solid #000;border-bottom:1px solid #e0e0e0;"></div>
<div style="left:584.47px;top:537.94px;font-size:14.5px;line-height:14.5px;color:#000;white-space:pre;">2</div>
<div style="left:567.85px;top:553.39px;font-size:14.3px;line-height:14.3px;color:#111;white-space:pre;transform:scaleX(1.0594);transform-origin:50% 0;">v3 Low</div>
<div style="left:557.6px;top:570px;width:13px;height:14px;background:#e000a8;border-right:1px solid #000;border-bottom:1px solid #000;box-shadow:inset 1px 1px 0 rgba(255,255,255,.55);"></div>
<svg style="left:561.6750000000001px;top:573.0px" width="3.8500000000000005" height="7"><path d="M3.8500000000000005 0 L0 3.5 L3.8500000000000005 7 Z" fill="#000"/></svg>
<div style="left:610.4px;top:570px;width:13px;height:14px;background:#e000a8;border-right:1px solid #000;border-bottom:1px solid #000;box-shadow:inset 1px 1px 0 rgba(255,255,255,.55);"></div>
<svg style="left:614.475px;top:573.0px" width="3.8500000000000005" height="7"><path d="M0 0 L3.8500000000000005 3.5 L0 7 Z" fill="#000"/></svg>
<div style="left:570.6px;top:570px;width:39.799999999999955px;height:14px;background:#fff;border-top:1.5px solid #000;border-left:1.5px solid #000;border-bottom:1px solid #e0e0e0;"></div>
<div style="left:582.94px;top:569.94px;font-size:14.5px;line-height:14.5px;color:#000;white-space:pre;">60</div>
<div style="left:566.26px;top:591.89px;font-size:14.3px;line-height:14.3px;color:#111;white-space:pre;transform:scaleX(1.0931);transform-origin:50% 0;">v3 High</div>
<div style="left:557.6px;top:608.6px;width:13px;height:13.899999999999977px;background:#e000a8;border-right:1px solid #000;border-bottom:1px solid #000;box-shadow:inset 1px 1px 0 rgba(255,255,255,.55);"></div>
<svg style="left:561.7025px;top:611.6px" width="3.794999999999988" height="6.899999999999977"><path d="M3.794999999999988 0 L0 3.4499999999999886 L3.794999999999988 6.899999999999977 Z" fill="#000"/></svg>
<div style="left:610.4px;top:608.6px;width:13px;height:13.899999999999977px;background:#e000a8;border-right:1px solid #000;border-bottom:1px solid #000;box-shadow:inset 1px 1px 0 rgba(255,255,255,.55);"></div>
<svg style="left:614.5024999999999px;top:611.6px" width="3.794999999999988" height="6.899999999999977"><path d="M0 0 L3.794999999999988 3.4499999999999886 L0 6.899999999999977 Z" fill="#000"/></svg>
<div style="left:570.6px;top:608.6px;width:39.799999999999955px;height:13.899999999999977px;background:#fff;border-top:1.5px solid #000;border-left:1.5px solid #000;border-bottom:1px solid #e0e0e0;"></div>
<div style="left:578.90px;top:608.49px;font-size:14.5px;line-height:14.5px;color:#000;white-space:pre;">128</div>
<div style="left:557.6px;top:633.5px;width:65.79999999999995px;height:21.799999999999955px;background:linear-gradient(#e6fbcf,#d4f4b0 50%,#c6ec9a 55%,#d2f2ae);border:1px solid #8cb46c;border-radius:6px;"></div>
<div style="left:561.67px;top:638.32px;font-size:12.5px;line-height:12.5px;color:#111;white-space:pre;transform:scaleX(0.9886);transform-origin:50% 0;">Nylon Guil</div>
<div style="left:566.53px;top:655.92px;font-size:12.5px;line-height:12.5px;color:#a2a2a2;white-space:pre;">Program</div>
<div style="left:557.6px;top:670px;width:13px;height:16.5px;background:linear-gradient(#e6e6e6,#d0d0d0);border-right:1px solid #000;border-bottom:1px solid #000;box-shadow:inset 1px 1px 0 rgba(255,255,255,.55);"></div>
<svg style="left:560.9875000000001px;top:673.0px" width="5.2250000000000005" height="9.5"><path d="M5.2250000000000005 0 L0 4.75 L5.2250000000000005 9.5 Z" fill="#7a7a7a"/></svg>
<div style="left:610.4px;top:670px;width:13px;height:16.5px;background:linear-gradient(#e6e6e6,#d0d0d0);border-right:1px solid #000;border-bottom:1px solid #000;box-shadow:inset 1px 1px 0 rgba(255,255,255,.55);"></div>
<svg style="left:613.7875px;top:673.0px" width="5.2250000000000005" height="9.5"><path d="M0 0 L5.2250000000000005 4.75 L0 9.5 Z" fill="#7a7a7a"/></svg>
<div style="left:570.6px;top:670px;width:39.799999999999955px;height:16.5px;background:#fff;border-top:1.5px solid #000;border-left:1.5px solid #000;border-bottom:1px solid #e0e0e0;"></div>
<div style="left:582.94px;top:671.19px;font-size:14.5px;line-height:14.5px;color:#000;white-space:pre;">24</div>
<div style="left:629px;top:270px;width:34px;height:23px;background:linear-gradient(#f8f8cc,#f4f2bc 50%,#eeeca8 60%,#f2f0b6);border:1px solid #b8b878;border-radius:5px;"></div>
<div style="left:636.50px;top:275.17px;font-size:13px;line-height:13px;color:#1a1ab0;white-space:pre;font-weight:bold;transform:scaleX(0.9417);transform-origin:0 0;">On</div>
<div style="left:629px;top:312px;width:13px;height:15px;background:#00e000;border-right:1px solid #000;border-bottom:1px solid #000;box-shadow:inset 1px 1px 0 rgba(255,255,255,.55);"></div>
<svg style="left:632.8px;top:315.0px" width="4.4" height="8"><path d="M4.4 0 L0 4.0 L4.4 8 Z" fill="#000"/></svg>
<div style="left:684px;top:312px;width:13px;height:15px;background:#00e000;border-right:1px solid #000;border-bottom:1px solid #000;box-shadow:inset 1px 1px 0 rgba(255,255,255,.55);"></div>
<svg style="left:687.8px;top:315.0px" width="4.4" height="8"><path d="M0 0 L4.4 4.0 L0 8 Z" fill="#000"/></svg>
<div style="left:642px;top:312px;width:42px;height:15px;background:#fff;border-top:1.5px solid #000;border-left:1.5px solid #000;border-bottom:1px solid #e0e0e0;"></div>
<div style="left:659.47px;top:312.44px;font-size:14.5px;line-height:14.5px;color:#000;white-space:pre;">0</div>
<div style="left:629px;top:345px;width:13px;height:15px;background:#00e000;border-right:1px solid #000;border-bottom:1px solid #000;box-shadow:inset 1px 1px 0 rgba(255,255,255,.55);"></div>
<svg style="left:632.8px;top:348.0px" width="4.4" height="8"><path d="M4.4 0 L0 4.0 L4.4 8 Z" fill="#000"/></svg>
<div style="left:684px;top:345px;width:13px;height:15px;background:#00e000;border-right:1px solid #000;border-bottom:1px solid #000;box-shadow:inset 1px 1px 0 rgba(255,255,255,.55);"></div>
<svg style="left:687.8px;top:348.0px" width="4.4" height="8"><path d="M0 0 L4.4 4.0 L0 8 Z" fill="#000"/></svg>
<div style="left:642px;top:345px;width:42px;height:15px;background:#fff;border-top:1.5px solid #000;border-left:1.5px solid #000;border-bottom:1px solid #e0e0e0;"></div>
<div style="left:651.40px;top:345.44px;font-size:14.5px;line-height:14.5px;color:#000;white-space:pre;">199</div>
<div style="left:629px;top:365px;width:28px;height:152px;background:linear-gradient(90deg,#9a9a9a,#bcbcbc 25%,#c8c8c8 50%,#b4b4b4 80%,#8e8e8e);border:1px solid #858585;border-radius:6px;"></div>
<div style="left:641.75px;top:367px;width:2.5px;height:148px;background:#000;"></div>
<div style="left:631px;top:425px;width:24px;height:16px;background:linear-gradient(#f0f0f0,#dcdcdc 32%,#b8481a 32%,#b8481a 60%,#f0e4d4 60%,#f2f2f2 78%,#c4c4c4);border:1px solid #9c9c9c;border-radius:3px;"></div>
<div style="left:668.38px;top:379.42px;font-size:12.5px;line-height:12.5px;color:#a2a2a2;white-space:pre;transform:scaleX(0.9892);transform-origin:50% 0;">Pan</div>
<div style="left:669px;top:366px;width:21px;height:16px;background:linear-gradient(#f6f6f6,#e2e2e2 50%,#d2d2d2);border:1px solid #b8b8b8;border-radius:3px;"></div>
<div style="left:674.0px;top:372.8px;width:11px;height:2.6px;background:#1818c8;"></div>
<div style="left:678.2px;top:368.5px;width:2.6px;height:11px;background:#1818c8;"></div>
<svg style="left:661.2px;top:391.2px" width="37.6" height="32"><ellipse cx="18.8" cy="16" rx="16.8" ry="14" fill="#a9a9a9" stroke="#000" stroke-width="1.2"/><path d="M2.57 19.62 A16.8 14 0 0 0 35.03 19.62" fill="none" stroke="#000" stroke-width="2"/><path d="M4.50 12.89 A14.8 12 0 0 1 26.20 5.61" fill="none" stroke="#d2d2d2" stroke-width="1.2"/><circle cx="18.8" cy="10" r="1.9" fill="#e8e830" stroke="#333" stroke-width=".8"/></svg>
<div style="left:659.85px;top:422.92px;font-size:12.5px;line-height:12.5px;color:#a2a2a2;white-space:pre;transform:scaleX(0.9927);transform-origin:50% 0;">Reverb</div>
<svg style="left:661.2px;top:434.1px" width="37.6" height="32"><ellipse cx="18.8" cy="16" rx="16.8" ry="14" fill="#a9a9a9" stroke="#000" stroke-width="1.2"/><path d="M2.57 19.62 A16.8 14 0 0 0 35.03 19.62" fill="none" stroke="#000" stroke-width="2"/><path d="M4.50 12.89 A14.8 12 0 0 1 26.20 5.61" fill="none" stroke="#d2d2d2" stroke-width="1.2"/><path d="M12.3 20.5 L19.3 15" stroke="#000" stroke-width="1.5" stroke-linecap="round"/></svg>
<div style="left:659.85px;top:470.92px;font-size:12.5px;line-height:12.5px;color:#a2a2a2;white-space:pre;transform:scaleX(0.9927);transform-origin:50% 0;">Chorus</div>
<svg style="left:661.2px;top:482.1px" width="37.6" height="32"><ellipse cx="18.8" cy="16" rx="16.8" ry="14" fill="#a9a9a9" stroke="#000" stroke-width="1.2"/><path d="M2.57 19.62 A16.8 14 0 0 0 35.03 19.62" fill="none" stroke="#000" stroke-width="2"/><path d="M4.50 12.89 A14.8 12 0 0 1 26.20 5.61" fill="none" stroke="#d2d2d2" stroke-width="1.2"/><path d="M12.3 20.5 L19.3 15" stroke="#000" stroke-width="1.5" stroke-linecap="round"/></svg>
<div style="left:639.75px;top:519.89px;font-size:14.3px;line-height:14.3px;color:#111;white-space:pre;transform:scaleX(1.0560);transform-origin:50% 0;">MchV4</div>
<div style="left:628px;top:536px;width:13px;height:18px;background:#0000d0;border-right:1px solid #000;border-bottom:1px solid #000;box-shadow:inset 1px 1px 0 rgba(255,255,255,.55);"></div>
<svg style="left:631.25px;top:539.5px" width="5.5" height="10"><path d="M5.5 0 L0 5.0 L5.5 10 Z" fill="#000"/></svg>
<div style="left:682px;top:536px;width:13px;height:18px;background:#0000d0;border-right:1px solid #000;border-bottom:1px solid #000;box-shadow:inset 1px 1px 0 rgba(255,255,255,.55);"></div>
<svg style="left:685.25px;top:539.5px" width="5.5" height="10"><path d="M0 0 L5.5 5.0 L0 10 Z" fill="#000"/></svg>
<div style="left:641px;top:536px;width:41px;height:18px;background:#fff;border-top:1.5px solid #000;border-left:1.5px solid #000;border-bottom:1px solid #e0e0e0;"></div>
<div style="left:657.97px;top:537.94px;font-size:14.5px;line-height:14.5px;color:#000;white-space:pre;">3</div>
<div style="left:640.55px;top:553.39px;font-size:14.3px;line-height:14.3px;color:#111;white-space:pre;transform:scaleX(1.0594);transform-origin:50% 0;">v4 Low</div>
<div style="left:629.4px;top:570px;width:13px;height:14px;background:#e000a8;border-right:1px solid #000;border-bottom:1px solid #000;box-shadow:inset 1px 1px 0 rgba(255,255,255,.55);"></div>
<svg style="left:633.475px;top:573.0px" width="3.8500000000000005" height="7"><path d="M3.8500000000000005 0 L0 3.5 L3.8500000000000005 7 Z" fill="#000"/></svg>
<div style="left:684px;top:570px;width:13px;height:14px;background:#e000a8;border-right:1px solid #000;border-bottom:1px solid #000;box-shadow:inset 1px 1px 0 rgba(255,255,255,.55);"></div>
<svg style="left:688.075px;top:573.0px" width="3.8500000000000005" height="7"><path d="M0 0 L3.8500000000000005 3.5 L0 7 Z" fill="#000"/></svg>
<div style="left:642.4px;top:570px;width:41.60000000000002px;height:14px;background:#fff;border-top:1.5px solid #000;border-left:1.5px solid #000;border-bottom:1px solid #e0e0e0;"></div>
<div style="left:655.64px;top:569.94px;font-size:14.5px;line-height:14.5px;color:#000;white-space:pre;">60</div>
<div style="left:638.96px;top:591.89px;font-size:14.3px;line-height:14.3px;color:#111;white-space:pre;transform:scaleX(1.0931);transform-origin:50% 0;">v4 High</div>
<div style="left:629.4px;top:608.6px;width:13px;height:13.899999999999977px;background:#e000a8;border-right:1px solid #000;border-bottom:1px solid #000;box-shadow:inset 1px 1px 0 rgba(255,255,255,.55);"></div>
<svg style="left:633.5024999999999px;top:611.6px" width="3.794999999999988" height="6.899999999999977"><path d="M3.794999999999988 0 L0 3.4499999999999886 L3.794999999999988 6.899999999999977 Z" fill="#000"/></svg>
<div style="left:684px;top:608.6px;width:13px;height:13.899999999999977px;background:#e000a8;border-right:1px solid #000;border-bottom:1px solid #000;box-shadow:inset 1px 1px 0 rgba(255,255,255,.55);"></div>
<svg style="left:688.1025px;top:611.6px" width="3.794999999999988" height="6.899999999999977"><path d="M0 0 L3.794999999999988 3.4499999999999886 L0 6.899999999999977 Z" fill="#000"/></svg>
<div style="left:642.4px;top:608.6px;width:41.60000000000002px;height:13.899999999999977px;background:#fff;border-top:1.5px solid #000;border-left:1.5px solid #000;border-bottom:1px solid #e0e0e0;"></div>
<div style="left:651.60px;top:608.49px;font-size:14.5px;line-height:14.5px;color:#000;white-space:pre;">128</div>
<div style="left:629.4px;top:633.5px;width:67.60000000000002px;height:21.799999999999955px;background:linear-gradient(#e6fbcf,#d4f4b0 50%,#c6ec9a 55%,#d2f2ae);border:1px solid #8cb46c;border-radius:6px;"></div>
<div style="left:633.67px;top:638.32px;font-size:12.5px;line-height:12.5px;color:#111;white-space:pre;transform:scaleX(0.9652);transform-origin:50% 0;">Grand Piai</div>
<div style="left:639.23px;top:655.92px;font-size:12.5px;line-height:12.5px;color:#a2a2a2;white-space:pre;">Program</div>
<div style="left:629.4px;top:670px;width:13px;height:16.5px;background:linear-gradient(#e6e6e6,#d0d0d0);border-right:1px solid #000;border-bottom:1px solid #000;box-shadow:inset 1px 1px 0 rgba(255,255,255,.55);"></div>
<svg style="left:632.7875px;top:673.0px" width="5.2250000000000005" height="9.5"><path d="M5.2250000000000005 0 L0 4.75 L5.2250000000000005 9.5 Z" fill="#7a7a7a"/></svg>
<div style="left:684px;top:670px;width:13px;height:16.5px;background:linear-gradient(#e6e6e6,#d0d0d0);border-right:1px solid #000;border-bottom:1px solid #000;box-shadow:inset 1px 1px 0 rgba(255,255,255,.55);"></div>
<svg style="left:687.3875px;top:673.0px" width="5.2250000000000005" height="9.5"><path d="M0 0 L5.2250000000000005 4.75 L0 9.5 Z" fill="#7a7a7a"/></svg>
<div style="left:642.4px;top:670px;width:41.60000000000002px;height:16.5px;background:#fff;border-top:1.5px solid #000;border-left:1.5px solid #000;border-bottom:1px solid #e0e0e0;"></div>
<div style="left:659.67px;top:671.19px;font-size:14.5px;line-height:14.5px;color:#000;white-space:pre;">0</div>
<div style="left:408.00px;top:295.69px;font-size:14.3px;line-height:14.3px;color:#111;white-space:pre;transform:scaleX(1.0661);transform-origin:0 0;">LowVel</div>
<div style="left:415.00px;top:328.59px;font-size:14.3px;line-height:14.3px;color:#111;white-space:pre;transform:scaleX(1.0535);transform-origin:0 0;">HiVel</div>
<div style="left:400px;top:690px;width:78px;height:43px;background:linear-gradient(#e8a8a8,#dc9090 50%,#d48484 55%,#da8e8e);border:1px solid #b87070;border-radius:5px;"></div>
<div style="left:420.32px;top:703.19px;font-size:14px;line-height:14px;color:#111;white-space:pre;font-weight:bold;transform:scaleX(0.9906);transform-origin:50% 0;">Panic</div>
<div style="left:702px;top:269px;width:84px;height:358px;background:linear-gradient(#cdcdcd,#c4c4c4 30%,#c0c0c0);border-top:1px solid #fafafa;border-left:1px solid #f2f2f2;border-right:1px solid #4a4a4a;border-bottom:1px solid #6a6a6a;"></div>
<div style="left:786px;top:269px;width:84px;height:358px;background:linear-gradient(#cdcdcd,#c4c4c4 30%,#c0c0c0);border-top:1px solid #fafafa;border-left:1px solid #f2f2f2;border-right:1px solid #4a4a4a;border-bottom:1px solid #6a6a6a;"></div>
<div style="left:870px;top:269px;width:84px;height:358px;background:linear-gradient(#cdcdcd,#c4c4c4 30%,#c0c0c0);border-top:1px solid #fafafa;border-left:1px solid #f2f2f2;border-right:1px solid #4a4a4a;border-bottom:1px solid #6a6a6a;"></div>
<div style="left:954px;top:318px;width:84px;height:309px;background:linear-gradient(#cdcdcd,#c4c4c4 30%,#c0c0c0);border-top:1px solid #fafafa;border-left:1px solid #f2f2f2;border-right:1px solid #4a4a4a;border-bottom:1px solid #6a6a6a;"></div>
<div style="left:1038px;top:318px;width:84px;height:305px;background:linear-gradient(#cdcdcd,#c4c4c4 30%,#c0c0c0);border-top:1px solid #fafafa;border-left:1px solid #f2f2f2;border-right:1px solid #4a4a4a;border-bottom:1px solid #6a6a6a;"></div>
<div style="left:1122px;top:318px;width:89px;height:305px;background:linear-gradient(#cdcdcd,#c4c4c4 30%,#c0c0c0);border-top:1px solid #fafafa;border-left:1px solid #f2f2f2;border-right:1px solid #4a4a4a;border-bottom:1px solid #6a6a6a;"></div>
<div style="left:1211px;top:318px;width:83px;height:305px;background:linear-gradient(#cdcdcd,#c4c4c4 30%,#c0c0c0);border-top:1px solid #fafafa;border-left:1px solid #f2f2f2;border-right:1px solid #4a4a4a;border-bottom:1px solid #6a6a6a;"></div>
<div style="left:954px;top:265px;width:84px;height:53px;background:#e2e2e2;"></div>
<div style="left:982.00px;top:267.57px;font-size:13.5px;line-height:13.5px;color:#d01010;white-space:pre;transform:scaleX(1.2376);transform-origin:0 0;">Bar</div>
<div style="left:983px;top:284px;width:53px;height:31px;background:#000;"></div>
<div style="left:1038px;top:265px;width:256px;height:53px;background:linear-gradient(#cacaca,#c2c2c2);border-right:1px solid #4a4a4a;"></div>
<div style="left:1056px;top:270px;width:221px;height:41px;background:#f8f8e8;border:1px solid #c8c8b8;border-radius:5px;"></div>
<div style="left:1113.50px;top:277.33px;font-size:25px;line-height:25px;color:#000;white-space:pre;font-weight:bold;transform:scaleX(1.0543);transform-origin:0 0;">Dm7(13)</div>
<div style="left:718.32px;top:318.84px;font-size:18.5px;line-height:18.5px;color:#d01020;white-space:pre;font-weight:bold;transform:scaleX(0.9723);transform-origin:50% 0;">Acc.1</div>
<div style="left:708.6px;top:337px;width:31.399999999999977px;height:22.30000000000001px;background:linear-gradient(#f2f2f2,#e0e0e0 45%,#cfcfcf 55%,#d8d8d8);border:1px solid #a8a8a8;border-radius:5px;"></div>
<div style="left:715.27px;top:341.82px;font-size:13px;line-height:13px;color:#1a1ab0;white-space:pre;font-weight:bold;transform:scaleX(0.9417);transform-origin:50% 0;">On</div>
<div style="left:708px;top:365px;width:28px;height:152.60000000000002px;background:linear-gradient(90deg,#9a9a9a,#bcbcbc 25%,#c8c8c8 50%,#b4b4b4 80%,#8e8e8e);border:1px solid #858585;border-radius:6px;"></div>
<div style="left:720.75px;top:367px;width:2.5px;height:148.60000000000002px;background:#000;"></div>
<div style="left:710px;top:396px;width:24px;height:16px;background:linear-gradient(#f0f0f0,#dcdcdc 32%,#b8481a 32%,#b8481a 60%,#f0e4d4 60%,#f2f2f2 78%,#c4c4c4);border:1px solid #9c9c9c;border-radius:3px;"></div>
<div style="left:747.08px;top:379.42px;font-size:12.5px;line-height:12.5px;color:#a2a2a2;white-space:pre;transform:scaleX(0.9892);transform-origin:50% 0;">Pan</div>
<div style="left:748px;top:366px;width:20.399999999999977px;height:16px;background:linear-gradient(#f6f6f6,#e2e2e2 50%,#d2d2d2);border:1px solid #b8b8b8;border-radius:3px;"></div>
<div style="left:752.7px;top:372.8px;width:11px;height:2.6px;background:#1818c8;"></div>
<div style="left:756.9000000000001px;top:368.5px;width:2.6px;height:11px;background:#1818c8;"></div>
<svg style="left:739.0px;top:391.2px" width="37.6" height="32"><ellipse cx="18.8" cy="16" rx="16.8" ry="14" fill="#a9a9a9" stroke="#000" stroke-width="1.2"/><path d="M2.57 19.62 A16.8 14 0 0 0 35.03 19.62" fill="none" stroke="#000" stroke-width="2"/><path d="M4.50 12.89 A14.8 12 0 0 1 26.20 5.61" fill="none" stroke="#d2d2d2" stroke-width="1.2"/><circle cx="18.8" cy="10.5" r="1.9" fill="#e8e830" stroke="#333" stroke-width=".8"/></svg>
<div style="left:737.65px;top:422.92px;font-size:12.5px;line-height:12.5px;color:#a2a2a2;white-space:pre;transform:scaleX(0.9927);transform-origin:50% 0;">Reverb</div>
<svg style="left:739.0px;top:434.4px" width="37.6" height="32"><ellipse cx="18.8" cy="16" rx="16.8" ry="14" fill="#a9a9a9" stroke="#000" stroke-width="1.2"/><path d="M2.57 19.62 A16.8 14 0 0 0 35.03 19.62" fill="none" stroke="#000" stroke-width="2"/><path d="M4.50 12.89 A14.8 12 0 0 1 26.20 5.61" fill="none" stroke="#d2d2d2" stroke-width="1.2"/><path d="M12.3 20.5 L19.3 15" stroke="#000" stroke-width="1.5" stroke-linecap="round"/></svg>
<div style="left:737.65px;top:470.92px;font-size:12.5px;line-height:12.5px;color:#a2a2a2;white-space:pre;transform:scaleX(0.9927);transform-origin:50% 0;">Chorus</div>
<svg style="left:739.0px;top:482.4px" width="37.6" height="32"><ellipse cx="18.8" cy="16" rx="16.8" ry="14" fill="#a9a9a9" stroke="#000" stroke-width="1.2"/><path d="M2.57 19.62 A16.8 14 0 0 0 35.03 19.62" fill="none" stroke="#000" stroke-width="2"/><path d="M4.50 12.89 A14.8 12 0 0 1 26.20 5.61" fill="none" stroke="#d2d2d2" stroke-width="1.2"/><path d="M12.3 20.5 L19.3 15" stroke="#000" stroke-width="1.5" stroke-linecap="round"/></svg>
<div style="left:719.15px;top:519.89px;font-size:14.3px;line-height:14.3px;color:#111;white-space:pre;transform:scaleX(1.0297);transform-origin:50% 0;">MAcc1</div>
<div style="left:708px;top:536px;width:14px;height:19px;background:linear-gradient(#dcdcdc,#c4c4c4);border-right:1px solid #000;border-bottom:1px solid #000;box-shadow:inset 1px 1px 0 rgba(255,255,255,.55);"></div>
<svg style="left:711.75px;top:540.0px" width="5.5" height="10"><path d="M5.5 0 L0 5.0 L5.5 10 Z" fill="#000"/></svg>
<div style="left:761px;top:536px;width:14px;height:19px;background:linear-gradient(#dcdcdc,#c4c4c4);border-right:1px solid #000;border-bottom:1px solid #000;box-shadow:inset 1px 1px 0 rgba(255,255,255,.55);"></div>
<svg style="left:764.75px;top:540.0px" width="5.5" height="10"><path d="M0 0 L5.5 5.0 L0 10 Z" fill="#000"/></svg>
<div style="left:722px;top:536px;width:39px;height:19px;background:#fff;border-top:1.5px solid #000;border-left:1.5px solid #000;border-bottom:1px solid #e0e0e0;"></div>
<div style="left:737.97px;top:538.44px;font-size:14.5px;line-height:14.5px;color:#000;white-space:pre;">4</div>
<div style="left:708px;top:562px;width:71.60000000000002px;height:22.399999999999977px;background:linear-gradient(#e6fbcf,#d4f4b0 50%,#c6ec9a 55%,#d2f2ae);border:1px solid #8cb46c;border-radius:6px;"></div>
<div style="left:712.18px;top:567.12px;font-size:12.5px;line-height:12.5px;color:#111;white-space:pre;transform:scaleX(0.9805);transform-origin:50% 0;">Grand Pian</div>
<div style="left:719.83px;top:585.92px;font-size:12.5px;line-height:12.5px;color:#a2a2a2;white-space:pre;">Program</div>
<div style="left:708px;top:600px;width:15px;height:18px;background:linear-gradient(#e6e6e6,#d0d0d0);border-right:1px solid #000;border-bottom:1px solid #000;box-shadow:inset 1px 1px 0 rgba(255,255,255,.55);"></div>
<svg style="left:712.25px;top:603.5px" width="5.5" height="10"><path d="M5.5 0 L0 5.0 L5.5 10 Z" fill="#7a7a7a"/></svg>
<div style="left:764.6px;top:600px;width:15px;height:18px;background:linear-gradient(#e6e6e6,#d0d0d0);border-right:1px solid #000;border-bottom:1px solid #000;box-shadow:inset 1px 1px 0 rgba(255,255,255,.55);"></div>
<svg style="left:768.85px;top:603.5px" width="5.5" height="10"><path d="M0 0 L5.5 5.0 L0 10 Z" fill="#7a7a7a"/></svg>
<div style="left:723px;top:600px;width:41.60000000000002px;height:18px;background:#fff;border-top:1.5px solid #000;border-left:1.5px solid #000;border-bottom:1px solid #e0e0e0;"></div>
<div style="left:740.27px;top:601.94px;font-size:14.5px;line-height:14.5px;color:#000;white-space:pre;">0</div>
<div style="left:802.32px;top:318.84px;font-size:18.5px;line-height:18.5px;color:#d01020;white-space:pre;font-weight:bold;transform:scaleX(0.9723);transform-origin:50% 0;">Acc.2</div>
<div style="left:792.5px;top:337px;width:31.5px;height:22.30000000000001px;background:linear-gradient(#f2f2f2,#e0e0e0 45%,#cfcfcf 55%,#d8d8d8);border:1px solid #a8a8a8;border-radius:5px;"></div>
<div style="left:799.22px;top:341.82px;font-size:13px;line-height:13px;color:#1a1ab0;white-space:pre;font-weight:bold;transform:scaleX(0.9417);transform-origin:50% 0;">On</div>
<div style="left:792px;top:365px;width:28px;height:152.60000000000002px;background:linear-gradient(90deg,#9a9a9a,#bcbcbc 25%,#c8c8c8 50%,#b4b4b4 80%,#8e8e8e);border:1px solid #858585;border-radius:6px;"></div>
<div style="left:804.75px;top:367px;width:2.5px;height:148.60000000000002px;background:#000;"></div>
<div style="left:794px;top:396px;width:24px;height:16px;background:linear-gradient(#f0f0f0,#dcdcdc 32%,#b8481a 32%,#b8481a 60%,#f0e4d4 60%,#f2f2f2 78%,#c4c4c4);border:1px solid #9c9c9c;border-radius:3px;"></div>
<div style="left:830.78px;top:379.42px;font-size:12.5px;line-height:12.5px;color:#a2a2a2;white-space:pre;transform:scaleX(0.9892);transform-origin:50% 0;">Pan</div>
<div style="left:831.8px;top:366px;width:20.200000000000045px;height:16px;background:linear-gradient(#f6f6f6,#e2e2e2 50%,#d2d2d2);border:1px solid #b8b8b8;border-radius:3px;"></div>
<div style="left:836.4px;top:372.8px;width:11px;height:2.6px;background:#1818c8;"></div>
<div style="left:840.6px;top:368.5px;width:2.6px;height:11px;background:#1818c8;"></div>
<svg style="left:823.2px;top:391.2px" width="37.6" height="32"><ellipse cx="18.8" cy="16" rx="16.8" ry="14" fill="#a9a9a9" stroke="#000" stroke-width="1.2"/><path d="M2.57 19.62 A16.8 14 0 0 0 35.03 19.62" fill="none" stroke="#000" stroke-width="2"/><path d="M4.50 12.89 A14.8 12 0 0 1 26.20 5.61" fill="none" stroke="#d2d2d2" stroke-width="1.2"/><circle cx="18.8" cy="10.5" r="1.9" fill="#e8e830" stroke="#333" stroke-width=".8"/></svg>
<div style="left:821.85px;top:422.92px;font-size:12.5px;line-height:12.5px;color:#a2a2a2;white-space:pre;transform:scaleX(0.9927);transform-origin:50% 0;">Reverb</div>
<svg style="left:823.2px;top:434.4px" width="37.6" height="32"><ellipse cx="18.8" cy="16" rx="16.8" ry="14" fill="#a9a9a9" stroke="#000" stroke-width="1.2"/><path d="M2.57 19.62 A16.8 14 0 0 0 35.03 19.62" fill="none" stroke="#000" stroke-width="2"/><path d="M4.50 12.89 A14.8 12 0 0 1 26.20 5.61" fill="none" stroke="#d2d2d2" stroke-width="1.2"/><path d="M12.3 20.5 L19.3 15" stroke="#000" stroke-width="1.5" stroke-linecap="round"/></svg>
<div style="left:821.85px;top:470.92px;font-size:12.5px;line-height:12.5px;color:#a2a2a2;white-space:pre;transform:scaleX(0.9927);transform-origin:50% 0;">Chorus</div>
<svg style="left:823.2px;top:482.4px" width="37.6" height="32"><ellipse cx="18.8" cy="16" rx="16.8" ry="14" fill="#a9a9a9" stroke="#000" stroke-width="1.2"/><path d="M2.57 19.62 A16.8 14 0 0 0 35.03 19.62" fill="none" stroke="#000" stroke-width="2"/><path d="M4.50 12.89 A14.8 12 0 0 1 26.20 5.61" fill="none" stroke="#d2d2d2" stroke-width="1.2"/><path d="M12.3 20.5 L19.3 15" stroke="#000" stroke-width="1.5" stroke-linecap="round"/></svg>
<div style="left:808.45px;top:519.89px;font-size:14.3px;line-height:14.3px;color:#111;white-space:pre;transform:scaleX(1.0297);transform-origin:50% 0;">MAcc2</div>
<div style="left:797px;top:536px;width:14px;height:19px;background:linear-gradient(#dcdcdc,#c4c4c4);border-right:1px solid #000;border-bottom:1px solid #000;box-shadow:inset 1px 1px 0 rgba(255,255,255,.55);"></div>
<svg style="left:800.75px;top:540.0px" width="5.5" height="10"><path d="M5.5 0 L0 5.0 L5.5 10 Z" fill="#000"/></svg>
<div style="left:850px;top:536px;width:14px;height:19px;background:linear-gradient(#dcdcdc,#c4c4c4);border-right:1px solid #000;border-bottom:1px solid #000;box-shadow:inset 1px 1px 0 rgba(255,255,255,.55);"></div>
<svg style="left:853.75px;top:540.0px" width="5.5" height="10"><path d="M0 0 L5.5 5.0 L0 10 Z" fill="#000"/></svg>
<div style="left:811px;top:536px;width:39px;height:19px;background:#fff;border-top:1.5px solid #000;border-left:1.5px solid #000;border-bottom:1px solid #e0e0e0;"></div>
<div style="left:826.97px;top:538.44px;font-size:14.5px;line-height:14.5px;color:#000;white-space:pre;">5</div>
<div style="left:792.4px;top:562px;width:71.20000000000005px;height:22.399999999999977px;background:linear-gradient(#e6fbcf,#d4f4b0 50%,#c6ec9a 55%,#d2f2ae);border:1px solid #8cb46c;border-radius:6px;"></div>
<div style="left:796.38px;top:567.12px;font-size:12.5px;line-height:12.5px;color:#111;white-space:pre;transform:scaleX(0.9805);transform-origin:50% 0;">Grand Pian</div>
<div style="left:804.03px;top:585.92px;font-size:12.5px;line-height:12.5px;color:#a2a2a2;white-space:pre;">Program</div>
<div style="left:792px;top:600px;width:15px;height:18px;background:linear-gradient(#e6e6e6,#d0d0d0);border-right:1px solid #000;border-bottom:1px solid #000;box-shadow:inset 1px 1px 0 rgba(255,255,255,.55);"></div>
<svg style="left:796.25px;top:603.5px" width="5.5" height="10"><path d="M5.5 0 L0 5.0 L5.5 10 Z" fill="#7a7a7a"/></svg>
<div style="left:849px;top:600px;width:15px;height:18px;background:linear-gradient(#e6e6e6,#d0d0d0);border-right:1px solid #000;border-bottom:1px solid #000;box-shadow:inset 1px 1px 0 rgba(255,255,255,.55);"></div>
<svg style="left:853.25px;top:603.5px" width="5.5" height="10"><path d="M0 0 L5.5 5.0 L0 10 Z" fill="#7a7a7a"/></svg>
<div style="left:807px;top:600px;width:42px;height:18px;background:#fff;border-top:1.5px solid #000;border-left:1.5px solid #000;border-bottom:1px solid #e0e0e0;"></div>
<div style="left:824.47px;top:601.94px;font-size:14.5px;line-height:14.5px;color:#000;white-space:pre;">0</div>
<div style="left:886.32px;top:318.84px;font-size:18.5px;line-height:18.5px;color:#d01020;white-space:pre;font-weight:bold;transform:scaleX(0.9723);transform-origin:50% 0;">Acc.3</div>
<div style="left:876.8px;top:337px;width:31.200000000000045px;height:22.30000000000001px;background:linear-gradient(#f2f2f2,#e0e0e0 45%,#cfcfcf 55%,#d8d8d8);border:1px solid #a8a8a8;border-radius:5px;"></div>
<div style="left:883.37px;top:341.82px;font-size:13px;line-height:13px;color:#1a1ab0;white-space:pre;font-weight:bold;transform:scaleX(0.9417);transform-origin:50% 0;">On</div>
<div style="left:876px;top:365px;width:28px;height:152.60000000000002px;background:linear-gradient(90deg,#9a9a9a,#bcbcbc 25%,#c8c8c8 50%,#b4b4b4 80%,#8e8e8e);border:1px solid #858585;border-radius:6px;"></div>
<div style="left:888.75px;top:367px;width:2.5px;height:148.60000000000002px;background:#000;"></div>
<div style="left:878px;top:396px;width:24px;height:16px;background:linear-gradient(#f0f0f0,#dcdcdc 32%,#b8481a 32%,#b8481a 60%,#f0e4d4 60%,#f2f2f2 78%,#c4c4c4);border:1px solid #9c9c9c;border-radius:3px;"></div>
<div style="left:914.73px;top:379.42px;font-size:12.5px;line-height:12.5px;color:#a2a2a2;white-space:pre;transform:scaleX(0.9892);transform-origin:50% 0;">Pan</div>
<div style="left:915.7px;top:366px;width:20.299999999999955px;height:16px;background:linear-gradient(#f6f6f6,#e2e2e2 50%,#d2d2d2);border:1px solid #b8b8b8;border-radius:3px;"></div>
<div style="left:920.35px;top:372.8px;width:11px;height:2.6px;background:#1818c8;"></div>
<div style="left:924.5500000000001px;top:368.5px;width:2.6px;height:11px;background:#1818c8;"></div>
<svg style="left:907.2px;top:391.2px" width="37.6" height="32"><ellipse cx="18.8" cy="16" rx="16.8" ry="14" fill="#a9a9a9" stroke="#000" stroke-width="1.2"/><path d="M2.57 19.62 A16.8 14 0 0 0 35.03 19.62" fill="none" stroke="#000" stroke-width="2"/><path d="M4.50 12.89 A14.8 12 0 0 1 26.20 5.61" fill="none" stroke="#d2d2d2" stroke-width="1.2"/><circle cx="18.8" cy="10.5" r="1.9" fill="#e8e830" stroke="#333" stroke-width=".8"/></svg>
<div style="left:905.85px;top:422.92px;font-size:12.5px;line-height:12.5px;color:#a2a2a2;white-space:pre;transform:scaleX(0.9927);transform-origin:50% 0;">Reverb</div>
<svg style="left:907.2px;top:434.4px" width="37.6" height="32"><ellipse cx="18.8" cy="16" rx="16.8" ry="14" fill="#a9a9a9" stroke="#000" stroke-width="1.2"/><path d="M2.57 19.62 A16.8 14 0 0 0 35.03 19.62" fill="none" stroke="#000" stroke-width="2"/><path d="M4.50 12.89 A14.8 12 0 0 1 26.20 5.61" fill="none" stroke="#d2d2d2" stroke-width="1.2"/><path d="M12.3 20.5 L19.3 15" stroke="#000" stroke-width="1.5" stroke-linecap="round"/></svg>
<div style="left:905.85px;top:470.92px;font-size:12.5px;line-height:12.5px;color:#a2a2a2;white-space:pre;transform:scaleX(0.9927);transform-origin:50% 0;">Chorus</div>
<svg style="left:907.2px;top:482.4px" width="37.6" height="32"><ellipse cx="18.8" cy="16" rx="16.8" ry="14" fill="#a9a9a9" stroke="#000" stroke-width="1.2"/><path d="M2.57 19.62 A16.8 14 0 0 0 35.03 19.62" fill="none" stroke="#000" stroke-width="2"/><path d="M4.50 12.89 A14.8 12 0 0 1 26.20 5.61" fill="none" stroke="#d2d2d2" stroke-width="1.2"/><path d="M12.3 20.5 L19.3 15" stroke="#000" stroke-width="1.5" stroke-linecap="round"/></svg>
<div style="left:887.65px;top:519.89px;font-size:14.3px;line-height:14.3px;color:#111;white-space:pre;transform:scaleX(1.0297);transform-origin:50% 0;">MAcc3</div>
<div style="left:876px;top:536px;width:14px;height:19px;background:linear-gradient(#dcdcdc,#c4c4c4);border-right:1px solid #000;border-bottom:1px solid #000;box-shadow:inset 1px 1px 0 rgba(255,255,255,.55);"></div>
<svg style="left:879.75px;top:540.0px" width="5.5" height="10"><path d="M5.5 0 L0 5.0 L5.5 10 Z" fill="#000"/></svg>
<div style="left:929px;top:536px;width:14px;height:19px;background:linear-gradient(#dcdcdc,#c4c4c4);border-right:1px solid #000;border-bottom:1px solid #000;box-shadow:inset 1px 1px 0 rgba(255,255,255,.55);"></div>
<svg style="left:932.75px;top:540.0px" width="5.5" height="10"><path d="M0 0 L5.5 5.0 L0 10 Z" fill="#000"/></svg>
<div style="left:890px;top:536px;width:39px;height:19px;background:#fff;border-top:1.5px solid #000;border-left:1.5px solid #000;border-bottom:1px solid #e0e0e0;"></div>
<div style="left:905.97px;top:538.44px;font-size:14.5px;line-height:14.5px;color:#000;white-space:pre;">7</div>
<div style="left:876.4px;top:562px;width:71.20000000000005px;height:22.399999999999977px;background:linear-gradient(#e6fbcf,#d4f4b0 50%,#c6ec9a 55%,#d2f2ae);border:1px solid #8cb46c;border-radius:6px;"></div>
<div style="left:880.38px;top:567.12px;font-size:12.5px;line-height:12.5px;color:#111;white-space:pre;transform:scaleX(0.9805);transform-origin:50% 0;">Grand Pian</div>
<div style="left:887.83px;top:585.92px;font-size:12.5px;line-height:12.5px;color:#a2a2a2;white-space:pre;">Program</div>
<div style="left:876px;top:600px;width:15px;height:18px;background:linear-gradient(#e6e6e6,#d0d0d0);border-right:1px solid #000;border-bottom:1px solid #000;box-shadow:inset 1px 1px 0 rgba(255,255,255,.55);"></div>
<svg style="left:880.25px;top:603.5px" width="5.5" height="10"><path d="M5.5 0 L0 5.0 L5.5 10 Z" fill="#7a7a7a"/></svg>
<div style="left:932.6px;top:600px;width:15px;height:18px;background:linear-gradient(#e6e6e6,#d0d0d0);border-right:1px solid #000;border-bottom:1px solid #000;box-shadow:inset 1px 1px 0 rgba(255,255,255,.55);"></div>
<svg style="left:936.85px;top:603.5px" width="5.5" height="10"><path d="M0 0 L5.5 5.0 L0 10 Z" fill="#7a7a7a"/></svg>
<div style="left:891px;top:600px;width:41.60000000000002px;height:18px;background:#fff;border-top:1.5px solid #000;border-left:1.5px solid #000;border-bottom:1px solid #e0e0e0;"></div>
<div style="left:908.27px;top:601.94px;font-size:14.5px;line-height:14.5px;color:#000;white-space:pre;">0</div>
<div style="left:970.32px;top:318.84px;font-size:18.5px;line-height:18.5px;color:#d01020;white-space:pre;font-weight:bold;transform:scaleX(0.9926);transform-origin:50% 0;">Acc.4</div>
<div style="left:960.8px;top:337px;width:31.5px;height:22.30000000000001px;background:linear-gradient(#f2f2f2,#e0e0e0 45%,#cfcfcf 55%,#d8d8d8);border:1px solid #a8a8a8;border-radius:5px;"></div>
<div style="left:967.52px;top:341.82px;font-size:13px;line-height:13px;color:#1a1ab0;white-space:pre;font-weight:bold;transform:scaleX(0.9417);transform-origin:50% 0;">On</div>
<div style="left:960.4px;top:365px;width:26.100000000000023px;height:152.60000000000002px;background:linear-gradient(90deg,#9a9a9a,#bcbcbc 25%,#c8c8c8 50%,#b4b4b4 80%,#8e8e8e);border:1px solid #858585;border-radius:6px;"></div>
<div style="left:972.2px;top:367px;width:2.5px;height:148.60000000000002px;background:#000;"></div>
<div style="left:962.4px;top:396px;width:22.100000000000023px;height:16px;background:linear-gradient(#f0f0f0,#dcdcdc 32%,#b8481a 32%,#b8481a 60%,#f0e4d4 60%,#f2f2f2 78%,#c4c4c4);border:1px solid #9c9c9c;border-radius:3px;"></div>
<div style="left:998.78px;top:379.42px;font-size:12.5px;line-height:12.5px;color:#a2a2a2;white-space:pre;transform:scaleX(0.9892);transform-origin:50% 0;">Pan</div>
<div style="left:999.6px;top:366px;width:20.600000000000023px;height:16px;background:linear-gradient(#f6f6f6,#e2e2e2 50%,#d2d2d2);border:1px solid #b8b8b8;border-radius:3px;"></div>
<div style="left:1004.4000000000001px;top:372.8px;width:11px;height:2.6px;background:#1818c8;"></div>
<div style="left:1008.6000000000001px;top:368.5px;width:2.6px;height:11px;background:#1818c8;"></div>
<svg style="left:991.2px;top:391.2px" width="37.6" height="32"><ellipse cx="18.8" cy="16" rx="16.8" ry="14" fill="#a9a9a9" stroke="#000" stroke-width="1.2"/><path d="M2.57 19.62 A16.8 14 0 0 0 35.03 19.62" fill="none" stroke="#000" stroke-width="2"/><path d="M4.50 12.89 A14.8 12 0 0 1 26.20 5.61" fill="none" stroke="#d2d2d2" stroke-width="1.2"/><circle cx="18.8" cy="10.5" r="1.9" fill="#e8e830" stroke="#333" stroke-width=".8"/></svg>
<div style="left:989.85px;top:422.92px;font-size:12.5px;line-height:12.5px;color:#a2a2a2;white-space:pre;transform:scaleX(0.9927);transform-origin:50% 0;">Reverb</div>
<svg style="left:991.2px;top:434.4px" width="37.6" height="32"><ellipse cx="18.8" cy="16" rx="16.8" ry="14" fill="#a9a9a9" stroke="#000" stroke-width="1.2"/><path d="M2.57 19.62 A16.8 14 0 0 0 35.03 19.62" fill="none" stroke="#000" stroke-width="2"/><path d="M4.50 12.89 A14.8 12 0 0 1 26.20 5.61" fill="none" stroke="#d2d2d2" stroke-width="1.2"/><path d="M12.3 20.5 L19.3 15" stroke="#000" stroke-width="1.5" stroke-linecap="round"/></svg>
<div style="left:989.85px;top:470.92px;font-size:12.5px;line-height:12.5px;color:#a2a2a2;white-space:pre;transform:scaleX(0.9927);transform-origin:50% 0;">Chorus</div>
<svg style="left:991.2px;top:482.4px" width="37.6" height="32"><ellipse cx="18.8" cy="16" rx="16.8" ry="14" fill="#a9a9a9" stroke="#000" stroke-width="1.2"/><path d="M2.57 19.62 A16.8 14 0 0 0 35.03 19.62" fill="none" stroke="#000" stroke-width="2"/><path d="M4.50 12.89 A14.8 12 0 0 1 26.20 5.61" fill="none" stroke="#d2d2d2" stroke-width="1.2"/><path d="M12.3 20.5 L19.3 15" stroke="#000" stroke-width="1.5" stroke-linecap="round"/></svg>
<div style="left:972.65px;top:519.89px;font-size:14.3px;line-height:14.3px;color:#111;white-space:pre;transform:scaleX(1.0297);transform-origin:50% 0;">MAcc4</div>
<div style="left:960px;top:536px;width:14px;height:19px;background:linear-gradient(#dcdcdc,#c4c4c4);border-right:1px solid #000;border-bottom:1px solid #000;box-shadow:inset 1px 1px 0 rgba(255,255,255,.55);"></div>
<svg style="left:963.75px;top:540.0px" width="5.5" height="10"><path d="M5.5 0 L0 5.0 L5.5 10 Z" fill="#000"/></svg>
<div style="left:1016px;top:536px;width:14px;height:19px;background:linear-gradient(#dcdcdc,#c4c4c4);border-right:1px solid #000;border-bottom:1px solid #000;box-shadow:inset 1px 1px 0 rgba(255,255,255,.55);"></div>
<svg style="left:1019.75px;top:540.0px" width="5.5" height="10"><path d="M0 0 L5.5 5.0 L0 10 Z" fill="#000"/></svg>
<div style="left:974px;top:536px;width:42px;height:19px;background:#fff;border-top:1.5px solid #000;border-left:1.5px solid #000;border-bottom:1px solid #e0e0e0;"></div>
<div style="left:991.47px;top:538.44px;font-size:14.5px;line-height:14.5px;color:#000;white-space:pre;">8</div>
<div style="left:960px;top:562px;width:71.59999999999991px;height:22.399999999999977px;background:linear-gradient(#e6fbcf,#d4f4b0 50%,#c6ec9a 55%,#d2f2ae);border:1px solid #8cb46c;border-radius:6px;"></div>
<div style="left:964.18px;top:567.12px;font-size:12.5px;line-height:12.5px;color:#111;white-space:pre;transform:scaleX(0.9805);transform-origin:50% 0;">Grand Pian</div>
<div style="left:971.83px;top:585.92px;font-size:12.5px;line-height:12.5px;color:#a2a2a2;white-space:pre;">Program</div>
<div style="left:960px;top:600px;width:15px;height:18px;background:linear-gradient(#e6e6e6,#d0d0d0);border-right:1px solid #000;border-bottom:1px solid #000;box-shadow:inset 1px 1px 0 rgba(255,255,255,.55);"></div>
<svg style="left:964.25px;top:603.5px" width="5.5" height="10"><path d="M5.5 0 L0 5.0 L5.5 10 Z" fill="#7a7a7a"/></svg>
<div style="left:1016.5999999999999px;top:600px;width:15px;height:18px;background:linear-gradient(#e6e6e6,#d0d0d0);border-right:1px solid #000;border-bottom:1px solid #000;box-shadow:inset 1px 1px 0 rgba(255,255,255,.55);"></div>
<svg style="left:1020.8499999999999px;top:603.5px" width="5.5" height="10"><path d="M0 0 L5.5 5.0 L0 10 Z" fill="#7a7a7a"/></svg>
<div style="left:975px;top:600px;width:41.59999999999991px;height:18px;background:#fff;border-top:1.5px solid #000;border-left:1.5px solid #000;border-bottom:1px solid #e0e0e0;"></div>
<div style="left:992.27px;top:601.94px;font-size:14.5px;line-height:14.5px;color:#000;white-space:pre;">0</div>
<div style="left:1054.32px;top:318.84px;font-size:18.5px;line-height:18.5px;color:#d01020;white-space:pre;font-weight:bold;transform:scaleX(0.9926);transform-origin:50% 0;">Acc.5</div>
<div style="left:1043.75px;top:337px;width:32.25px;height:22.30000000000001px;background:linear-gradient(#f2f2f2,#e0e0e0 45%,#cfcfcf 55%,#d8d8d8);border:1px solid #a8a8a8;border-radius:5px;"></div>
<div style="left:1050.85px;top:341.82px;font-size:13px;line-height:13px;color:#1a1ab0;white-space:pre;font-weight:bold;transform:scaleX(0.9417);transform-origin:50% 0;">On</div>
<div style="left:1043.3px;top:365px;width:27.100000000000136px;height:152.60000000000002px;background:linear-gradient(90deg,#9a9a9a,#bcbcbc 25%,#c8c8c8 50%,#b4b4b4 80%,#8e8e8e);border:1px solid #858585;border-radius:6px;"></div>
<div style="left:1055.6px;top:367px;width:2.5px;height:148.60000000000002px;background:#000;"></div>
<div style="left:1045.3px;top:396px;width:23.100000000000136px;height:16px;background:linear-gradient(#f0f0f0,#dcdcdc 32%,#b8481a 32%,#b8481a 60%,#f0e4d4 60%,#f2f2f2 78%,#c4c4c4);border:1px solid #9c9c9c;border-radius:3px;"></div>
<div style="left:1082.75px;top:379.42px;font-size:12.5px;line-height:12.5px;color:#a2a2a2;white-space:pre;transform:scaleX(0.9892);transform-origin:50% 0;">Pan</div>
<div style="left:1083.75px;top:366px;width:20.25px;height:16px;background:linear-gradient(#f6f6f6,#e2e2e2 50%,#d2d2d2);border:1px solid #b8b8b8;border-radius:3px;"></div>
<div style="left:1088.375px;top:372.8px;width:11px;height:2.6px;background:#1818c8;"></div>
<div style="left:1092.575px;top:368.5px;width:2.6px;height:11px;background:#1818c8;"></div>
<svg style="left:1075.2px;top:391.2px" width="37.6" height="32"><ellipse cx="18.8" cy="16" rx="16.8" ry="14" fill="#a9a9a9" stroke="#000" stroke-width="1.2"/><path d="M2.57 19.62 A16.8 14 0 0 0 35.03 19.62" fill="none" stroke="#000" stroke-width="2"/><path d="M4.50 12.89 A14.8 12 0 0 1 26.20 5.61" fill="none" stroke="#d2d2d2" stroke-width="1.2"/><circle cx="18.8" cy="10.5" r="1.9" fill="#e8e830" stroke="#333" stroke-width=".8"/></svg>
<div style="left:1073.85px;top:422.92px;font-size:12.5px;line-height:12.5px;color:#a2a2a2;white-space:pre;transform:scaleX(0.9927);transform-origin:50% 0;">Reverb</div>
<svg style="left:1075.2px;top:434.4px" width="37.6" height="32"><ellipse cx="18.8" cy="16" rx="16.8" ry="14" fill="#a9a9a9" stroke="#000" stroke-width="1.2"/><path d="M2.57 19.62 A16.8 14 0 0 0 35.03 19.62" fill="none" stroke="#000" stroke-width="2"/><path d="M4.50 12.89 A14.8 12 0 0 1 26.20 5.61" fill="none" stroke="#d2d2d2" stroke-width="1.2"/><path d="M12.3 20.5 L19.3 15" stroke="#000" stroke-width="1.5" stroke-linecap="round"/></svg>
<div style="left:1073.85px;top:470.92px;font-size:12.5px;line-height:12.5px;color:#a2a2a2;white-space:pre;transform:scaleX(0.9927);transform-origin:50% 0;">Chorus</div>
<svg style="left:1075.2px;top:482.4px" width="37.6" height="32"><ellipse cx="18.8" cy="16" rx="16.8" ry="14" fill="#a9a9a9" stroke="#000" stroke-width="1.2"/><path d="M2.57 19.62 A16.8 14 0 0 0 35.03 19.62" fill="none" stroke="#000" stroke-width="2"/><path d="M4.50 12.89 A14.8 12 0 0 1 26.20 5.61" fill="none" stroke="#d2d2d2" stroke-width="1.2"/><path d="M12.3 20.5 L19.3 15" stroke="#000" stroke-width="1.5" stroke-linecap="round"/></svg>
<div style="left:1056.45px;top:519.89px;font-size:14.3px;line-height:14.3px;color:#111;white-space:pre;transform:scaleX(1.0411);transform-origin:50% 0;">MAcc5</div>
<div style="left:1043px;top:536px;width:14px;height:19px;background:linear-gradient(#dcdcdc,#c4c4c4);border-right:1px solid #000;border-bottom:1px solid #000;box-shadow:inset 1px 1px 0 rgba(255,255,255,.55);"></div>
<svg style="left:1046.75px;top:540.0px" width="5.5" height="10"><path d="M5.5 0 L0 5.0 L5.5 10 Z" fill="#000"/></svg>
<div style="left:1100px;top:536px;width:14px;height:19px;background:linear-gradient(#dcdcdc,#c4c4c4);border-right:1px solid #000;border-bottom:1px solid #000;box-shadow:inset 1px 1px 0 rgba(255,255,255,.55);"></div>
<svg style="left:1103.75px;top:540.0px" width="5.5" height="10"><path d="M0 0 L5.5 5.0 L0 10 Z" fill="#000"/></svg>
<div style="left:1057px;top:536px;width:43px;height:19px;background:#fff;border-top:1.5px solid #000;border-left:1.5px solid #000;border-bottom:1px solid #e0e0e0;"></div>
<div style="left:1070.94px;top:538.44px;font-size:14.5px;line-height:14.5px;color:#000;white-space:pre;">10</div>
<div style="left:1043.6px;top:562px;width:72.0px;height:22.399999999999977px;background:linear-gradient(#e6fbcf,#d4f4b0 50%,#c6ec9a 55%,#d2f2ae);border:1px solid #8cb46c;border-radius:6px;"></div>
<div style="left:1047.98px;top:567.12px;font-size:12.5px;line-height:12.5px;color:#111;white-space:pre;transform:scaleX(0.9805);transform-origin:50% 0;">Grand Pian</div>
<div style="left:1055.03px;top:585.92px;font-size:12.5px;line-height:12.5px;color:#a2a2a2;white-space:pre;">Program</div>
<div style="left:1043px;top:600px;width:15px;height:18px;background:linear-gradient(#e6e6e6,#d0d0d0);border-right:1px solid #000;border-bottom:1px solid #000;box-shadow:inset 1px 1px 0 rgba(255,255,255,.55);"></div>
<svg style="left:1047.25px;top:603.5px" width="5.5" height="10"><path d="M5.5 0 L0 5.0 L5.5 10 Z" fill="#7a7a7a"/></svg>
<div style="left:1100px;top:600px;width:15px;height:18px;background:linear-gradient(#e6e6e6,#d0d0d0);border-right:1px solid #000;border-bottom:1px solid #000;box-shadow:inset 1px 1px 0 rgba(255,255,255,.55);"></div>
<svg style="left:1104.25px;top:603.5px" width="5.5" height="10"><path d="M0 0 L5.5 5.0 L0 10 Z" fill="#7a7a7a"/></svg>
<div style="left:1058px;top:600px;width:42px;height:18px;background:#fff;border-top:1.5px solid #000;border-left:1.5px solid #000;border-bottom:1px solid #e0e0e0;"></div>
<div style="left:1075.47px;top:601.94px;font-size:14.5px;line-height:14.5px;color:#000;white-space:pre;">0</div>
<div style="left:1144.29px;top:318.84px;font-size:18.5px;line-height:18.5px;color:#d01020;white-space:pre;font-weight:bold;transform:scaleX(0.9270);transform-origin:50% 0;">Bass</div>
<div style="left:1133.3px;top:337px;width:32.950000000000045px;height:22.30000000000001px;background:linear-gradient(#f8f8cc,#f4f2bc 50%,#eeeca8 60%,#f2f0b6);border:1px solid #b8b878;border-radius:5px;"></div>
<div style="left:1140.75px;top:341.82px;font-size:13px;line-height:13px;color:#1a1ab0;white-space:pre;font-weight:bold;transform:scaleX(0.9417);transform-origin:50% 0;">On</div>
<div style="left:1139px;top:365px;width:27.700000000000045px;height:152.60000000000002px;background:linear-gradient(90deg,#9a9a9a,#bcbcbc 25%,#c8c8c8 50%,#b4b4b4 80%,#8e8e8e);border:1px solid #858585;border-radius:6px;"></div>
<div style="left:1151.6px;top:367px;width:2.5px;height:148.60000000000002px;background:#000;"></div>
<div style="left:1141px;top:396px;width:23.700000000000045px;height:16px;background:linear-gradient(#f0f0f0,#dcdcdc 32%,#b8481a 32%,#b8481a 60%,#f0e4d4 60%,#f2f2f2 78%,#c4c4c4);border:1px solid #9c9c9c;border-radius:3px;"></div>
<div style="left:1177.95px;top:379.42px;font-size:12.5px;line-height:12.5px;color:#a2a2a2;white-space:pre;transform:scaleX(0.9892);transform-origin:50% 0;">Pan</div>
<div style="left:1178.75px;top:366px;width:20.65000000000009px;height:16px;background:linear-gradient(#f6f6f6,#e2e2e2 50%,#d2d2d2);border:1px solid #b8b8b8;border-radius:3px;"></div>
<div style="left:1183.575px;top:372.8px;width:11px;height:2.6px;background:#1818c8;"></div>
<div style="left:1187.775px;top:368.5px;width:2.6px;height:11px;background:#1818c8;"></div>
<svg style="left:1170.2px;top:391.2px" width="37.6" height="32"><ellipse cx="18.8" cy="16" rx="16.8" ry="14" fill="#a9a9a9" stroke="#000" stroke-width="1.2"/><path d="M2.57 19.62 A16.8 14 0 0 0 35.03 19.62" fill="none" stroke="#000" stroke-width="2"/><path d="M4.50 12.89 A14.8 12 0 0 1 26.20 5.61" fill="none" stroke="#d2d2d2" stroke-width="1.2"/><circle cx="18.8" cy="10.5" r="1.9" fill="#e8e830" stroke="#333" stroke-width=".8"/></svg>
<div style="left:1168.85px;top:422.92px;font-size:12.5px;line-height:12.5px;color:#a2a2a2;white-space:pre;transform:scaleX(0.9927);transform-origin:50% 0;">Reverb</div>
<svg style="left:1170.2px;top:434.4px" width="37.6" height="32"><ellipse cx="18.8" cy="16" rx="16.8" ry="14" fill="#a9a9a9" stroke="#000" stroke-width="1.2"/><path d="M2.57 19.62 A16.8 14 0 0 0 35.03 19.62" fill="none" stroke="#000" stroke-width="2"/><path d="M4.50 12.89 A14.8 12 0 0 1 26.20 5.61" fill="none" stroke="#d2d2d2" stroke-width="1.2"/><path d="M12.3 20.5 L19.3 15" stroke="#000" stroke-width="1.5" stroke-linecap="round"/></svg>
<div style="left:1168.85px;top:470.92px;font-size:12.5px;line-height:12.5px;color:#a2a2a2;white-space:pre;transform:scaleX(0.9927);transform-origin:50% 0;">Chorus</div>
<svg style="left:1170.2px;top:482.4px" width="37.6" height="32"><ellipse cx="18.8" cy="16" rx="16.8" ry="14" fill="#a9a9a9" stroke="#000" stroke-width="1.2"/><path d="M2.57 19.62 A16.8 14 0 0 0 35.03 19.62" fill="none" stroke="#000" stroke-width="2"/><path d="M4.50 12.89 A14.8 12 0 0 1 26.20 5.61" fill="none" stroke="#d2d2d2" stroke-width="1.2"/><path d="M12.3 20.5 L19.3 15" stroke="#000" stroke-width="1.5" stroke-linecap="round"/></svg>
<div style="left:1134.39px;top:519.89px;font-size:14.3px;line-height:14.3px;color:#111;white-space:pre;transform:scaleX(1.0311);transform-origin:50% 0;">Bass Chl</div>
<div style="left:1127px;top:536px;width:14px;height:19px;background:linear-gradient(#dcdcdc,#c4c4c4);border-right:1px solid #000;border-bottom:1px solid #000;box-shadow:inset 1px 1px 0 rgba(255,255,255,.55);"></div>
<svg style="left:1130.75px;top:540.0px" width="5.5" height="10"><path d="M5.5 0 L0 5.0 L5.5 10 Z" fill="#000"/></svg>
<div style="left:1184px;top:536px;width:14px;height:19px;background:linear-gradient(#dcdcdc,#c4c4c4);border-right:1px solid #000;border-bottom:1px solid #000;box-shadow:inset 1px 1px 0 rgba(255,255,255,.55);"></div>
<svg style="left:1187.75px;top:540.0px" width="5.5" height="10"><path d="M0 0 L5.5 5.0 L0 10 Z" fill="#000"/></svg>
<div style="left:1141px;top:536px;width:43px;height:19px;background:#fff;border-top:1.5px solid #000;border-left:1.5px solid #000;border-bottom:1px solid #e0e0e0;"></div>
<div style="left:1158.97px;top:538.44px;font-size:14.5px;line-height:14.5px;color:#000;white-space:pre;">6</div>
<div style="left:1127.6px;top:562px;width:78.0px;height:22.399999999999977px;background:linear-gradient(#e6fbcf,#d4f4b0 50%,#c6ec9a 55%,#d2f2ae);border:1px solid #8cb46c;border-radius:6px;"></div>
<div style="left:1131.51px;top:567.12px;font-size:12.5px;line-height:12.5px;color:#111;white-space:pre;transform:scaleX(0.9689);transform-origin:50% 0;">Grand Piano</div>
<div style="left:1145.33px;top:585.92px;font-size:12.5px;line-height:12.5px;color:#a2a2a2;white-space:pre;">Program</div>
<div style="left:1133px;top:600px;width:15px;height:18px;background:linear-gradient(#e6e6e6,#d0d0d0);border-right:1px solid #000;border-bottom:1px solid #000;box-shadow:inset 1px 1px 0 rgba(255,255,255,.55);"></div>
<svg style="left:1137.25px;top:603.5px" width="5.5" height="10"><path d="M5.5 0 L0 5.0 L5.5 10 Z" fill="#7a7a7a"/></svg>
<div style="left:1190.6px;top:600px;width:15px;height:18px;background:linear-gradient(#e6e6e6,#d0d0d0);border-right:1px solid #000;border-bottom:1px solid #000;box-shadow:inset 1px 1px 0 rgba(255,255,255,.55);"></div>
<svg style="left:1194.85px;top:603.5px" width="5.5" height="10"><path d="M0 0 L5.5 5.0 L0 10 Z" fill="#7a7a7a"/></svg>
<div style="left:1148px;top:600px;width:42.59999999999991px;height:18px;background:#fff;border-top:1.5px solid #000;border-left:1.5px solid #000;border-bottom:1px solid #e0e0e0;"></div>
<div style="left:1165.77px;top:601.94px;font-size:14.5px;line-height:14.5px;color:#000;white-space:pre;">0</div>
<div style="left:1224.20px;top:318.84px;font-size:18.5px;line-height:18.5px;color:#d01020;white-space:pre;font-weight:bold;transform:scaleX(1.0069);transform-origin:50% 0;">Drums</div>
<div style="left:1217.7px;top:337px;width:31.299999999999955px;height:22.30000000000001px;background:linear-gradient(#f8f8cc,#f4f2bc 50%,#eeeca8 60%,#f2f0b6);border:1px solid #b8b878;border-radius:5px;"></div>
<div style="left:1224.32px;top:341.82px;font-size:13px;line-height:13px;color:#1a1ab0;white-space:pre;font-weight:bold;transform:scaleX(0.9417);transform-origin:50% 0;">On</div>
<div style="left:1222.5px;top:365px;width:27.09999999999991px;height:152.60000000000002px;background:linear-gradient(90deg,#9a9a9a,#bcbcbc 25%,#c8c8c8 50%,#b4b4b4 80%,#8e8e8e);border:1px solid #858585;border-radius:6px;"></div>
<div style="left:1234.8px;top:367px;width:2.5px;height:148.60000000000002px;background:#000;"></div>
<div style="left:1224.5px;top:396px;width:23.09999999999991px;height:16px;background:linear-gradient(#f0f0f0,#dcdcdc 32%,#b8481a 32%,#b8481a 60%,#f0e4d4 60%,#f2f2f2 78%,#c4c4c4);border:1px solid #9c9c9c;border-radius:3px;"></div>
<div style="left:1261.63px;top:379.42px;font-size:12.5px;line-height:12.5px;color:#a2a2a2;white-space:pre;transform:scaleX(0.9892);transform-origin:50% 0;">Pan</div>
<div style="left:1262.5px;top:366px;width:20.5px;height:16px;background:linear-gradient(#f6f6f6,#e2e2e2 50%,#d2d2d2);border:1px solid #b8b8b8;border-radius:3px;"></div>
<div style="left:1267.25px;top:372.8px;width:11px;height:2.6px;background:#1818c8;"></div>
<div style="left:1271.45px;top:368.5px;width:2.6px;height:11px;background:#1818c8;"></div>
<svg style="left:1254.2px;top:391.2px" width="37.6" height="32"><ellipse cx="18.8" cy="16" rx="16.8" ry="14" fill="#a9a9a9" stroke="#000" stroke-width="1.2"/><path d="M2.57 19.62 A16.8 14 0 0 0 35.03 19.62" fill="none" stroke="#000" stroke-width="2"/><path d="M4.50 12.89 A14.8 12 0 0 1 26.20 5.61" fill="none" stroke="#d2d2d2" stroke-width="1.2"/><circle cx="18.8" cy="10.5" r="1.9" fill="#e8e830" stroke="#333" stroke-width=".8"/></svg>
<div style="left:1252.85px;top:422.92px;font-size:12.5px;line-height:12.5px;color:#a2a2a2;white-space:pre;transform:scaleX(0.9927);transform-origin:50% 0;">Reverb</div>
<svg style="left:1254.2px;top:434.4px" width="37.6" height="32"><ellipse cx="18.8" cy="16" rx="16.8" ry="14" fill="#a9a9a9" stroke="#000" stroke-width="1.2"/><path d="M2.57 19.62 A16.8 14 0 0 0 35.03 19.62" fill="none" stroke="#000" stroke-width="2"/><path d="M4.50 12.89 A14.8 12 0 0 1 26.20 5.61" fill="none" stroke="#d2d2d2" stroke-width="1.2"/><path d="M12.3 20.5 L19.3 15" stroke="#000" stroke-width="1.5" stroke-linecap="round"/></svg>
<div style="left:1252.85px;top:470.92px;font-size:12.5px;line-height:12.5px;color:#a2a2a2;white-space:pre;transform:scaleX(0.9927);transform-origin:50% 0;">Chorus</div>
<svg style="left:1254.2px;top:482.4px" width="37.6" height="32"><ellipse cx="18.8" cy="16" rx="16.8" ry="14" fill="#a9a9a9" stroke="#000" stroke-width="1.2"/><path d="M2.57 19.62 A16.8 14 0 0 0 35.03 19.62" fill="none" stroke="#000" stroke-width="2"/><path d="M4.50 12.89 A14.8 12 0 0 1 26.20 5.61" fill="none" stroke="#d2d2d2" stroke-width="1.2"/><path d="M12.3 20.5 L19.3 15" stroke="#000" stroke-width="1.5" stroke-linecap="round"/></svg>
<div style="left:1224.41px;top:519.89px;font-size:14.3px;line-height:14.3px;color:#111;white-space:pre;transform:scaleX(1.0930);transform-origin:50% 0;">Drum Chl</div>
<div style="left:1219px;top:536px;width:14px;height:19px;background:linear-gradient(#dcdcdc,#c4c4c4);border-right:1px solid #000;border-bottom:1px solid #000;box-shadow:inset 1px 1px 0 rgba(255,255,255,.55);"></div>
<svg style="left:1222.75px;top:540.0px" width="5.5" height="10"><path d="M5.5 0 L0 5.0 L5.5 10 Z" fill="#000"/></svg>
<div style="left:1276px;top:536px;width:14px;height:19px;background:linear-gradient(#dcdcdc,#c4c4c4);border-right:1px solid #000;border-bottom:1px solid #000;box-shadow:inset 1px 1px 0 rgba(255,255,255,.55);"></div>
<svg style="left:1279.75px;top:540.0px" width="5.5" height="10"><path d="M0 0 L5.5 5.0 L0 10 Z" fill="#000"/></svg>
<div style="left:1233px;top:536px;width:43px;height:19px;background:#fff;border-top:1.5px solid #000;border-left:1.5px solid #000;border-bottom:1px solid #e0e0e0;"></div>
<div style="left:1250.97px;top:538.44px;font-size:14.5px;line-height:14.5px;color:#000;white-space:pre;">9</div>
<div style="left:1217.6px;top:562px;width:72.0px;height:22.399999999999977px;background:linear-gradient(#e6fbcf,#d4f4b0 50%,#c6ec9a 55%,#d2f2ae);border:1px solid #8cb46c;border-radius:6px;"></div>
<div style="left:1222.60px;top:567.12px;font-size:12.5px;line-height:12.5px;color:#111;white-space:pre;transform:scaleX(0.9856);transform-origin:0 0;">Standard</div>
<div style="left:1229.33px;top:585.92px;font-size:12.5px;line-height:12.5px;color:#a2a2a2;white-space:pre;">Program</div>
<div style="left:1217px;top:600px;width:15px;height:18px;background:linear-gradient(#e6e6e6,#d0d0d0);border-right:1px solid #000;border-bottom:1px solid #000;box-shadow:inset 1px 1px 0 rgba(255,255,255,.55);"></div>
<svg style="left:1221.25px;top:603.5px" width="5.5" height="10"><path d="M5.5 0 L0 5.0 L5.5 10 Z" fill="#7a7a7a"/></svg>
<div style="left:1274.6px;top:600px;width:15px;height:18px;background:linear-gradient(#e6e6e6,#d0d0d0);border-right:1px solid #000;border-bottom:1px solid #000;box-shadow:inset 1px 1px 0 rgba(255,255,255,.55);"></div>
<svg style="left:1278.85px;top:603.5px" width="5.5" height="10"><path d="M0 0 L5.5 5.0 L0 10 Z" fill="#7a7a7a"/></svg>
<div style="left:1232px;top:600px;width:42.59999999999991px;height:18px;background:#fff;border-top:1.5px solid #000;border-left:1.5px solid #000;border-bottom:1px solid #e0e0e0;"></div>
<div style="left:1249.77px;top:601.94px;font-size:14.5px;line-height:14.5px;color:#000;white-space:pre;">0</div>
<div style="left:713px;top:647px;width:135px;height:62px;background:#c2c2c2;border-top:1px solid #f4f4f4;border-left:1px solid #f4f4f4;border-right:1px solid #666;border-bottom:1px solid #666;"></div>
<div style="left:731.00px;top:659.92px;font-size:12.5px;line-height:12.5px;color:#a0a0a0;white-space:pre;transform:scaleX(0.9740);transform-origin:0 0;">Har.</div>
<div style="left:758px;top:656px;width:12px;height:20px;background:linear-gradient(#e6e6e6,#d0d0d0);border-right:1px solid #000;border-bottom:1px solid #000;box-shadow:inset 1px 1px 0 rgba(255,255,255,.55);"></div>
<svg style="left:760.75px;top:660.5px" width="5.5" height="10"><path d="M5.5 0 L0 5.0 L5.5 10 Z" fill="#7a7a7a"/></svg>
<div style="left:802px;top:656px;width:12px;height:20px;background:linear-gradient(#e6e6e6,#d0d0d0);border-right:1px solid #000;border-bottom:1px solid #000;box-shadow:inset 1px 1px 0 rgba(255,255,255,.55);"></div>
<svg style="left:804.75px;top:660.5px" width="5.5" height="10"><path d="M0 0 L5.5 5.0 L0 10 Z" fill="#7a7a7a"/></svg>
<div style="left:770px;top:656px;width:32px;height:20px;background:#fff;border-top:1.5px solid #000;border-left:1.5px solid #000;border-bottom:1px solid #e0e0e0;"></div>
<div style="left:782.61px;top:659.19px;font-size:14px;line-height:14px;color:#000;white-space:pre;">0</div>
<div style="left:725px;top:680px;width:106px;height:20px;background:linear-gradient(#e6fbcf,#d4f4b0 50%,#c6ec9a 55%,#d2f2ae);border:1px solid #8cb46c;border-radius:6px;"></div>
<div style="left:728.60px;top:682.65px;font-size:14px;line-height:14px;color:#3a4a08;white-space:pre;font-weight:bold;transform:scaleX(0.9696);transform-origin:0 0;">Unison</div>
<div style="left:874px;top:633px;width:78px;height:24px;background:linear-gradient(#d0e4b0,#bcd89a 50%,#b0cf8c 55%,#bad696);border:1px solid #8aa86a;border-radius:4px;"></div>
<div style="left:900.49px;top:638.92px;font-size:12.5px;line-height:12.5px;color:#c8208c;white-space:pre;">Intro</div>
<div style="left:963px;top:633px;width:109px;height:23px;background:linear-gradient(#f8f8cc,#f4f2bc 50%,#eeeca8 60%,#f2f0b6);border:1px solid #b8b878;border-radius:4px;"></div>
<div style="left:1004.30px;top:638.42px;font-size:12.5px;line-height:12.5px;color:#c8208c;white-space:pre;transform:scaleX(0.9847);transform-origin:50% 0;">Var1</div>
<div style="left:1090px;top:633px;width:110px;height:23px;background:linear-gradient(#e2e2e2,#d2d2d2 50%,#c8c8c8 55%,#d0d0d0);border:1px solid #a8a8a8;border-radius:4px;"></div>
<div style="left:1131.80px;top:638.42px;font-size:12.5px;line-height:12.5px;color:#c8208c;white-space:pre;transform:scaleX(0.9847);transform-origin:50% 0;">Var2</div>
<div style="left:1206px;top:628px;width:77px;height:38px;background:linear-gradient(#d0e4b0,#bcd89a 50%,#b0cf8c 55%,#bad696);border:1px solid #8aa86a;border-radius:4px;"></div>
<div style="left:1225.04px;top:640.92px;font-size:12.5px;line-height:12.5px;color:#c8208c;white-space:pre;transform:scaleX(0.9506);transform-origin:50% 0;">Ending</div>
<div style="left:896.00px;top:682.42px;font-size:12.5px;line-height:12.5px;color:#9a9a9a;white-space:pre;transform:scaleX(1.0116);transform-origin:0 0;">Next</div>
<div style="left:942.5px;top:676px;width:78.0px;height:32.5px;background:linear-gradient(#e2e2e2,#d2d2d2 50%,#c8c8c8 55%,#d0d0d0);border:1px solid #a8a8a8;border-radius:4px;"></div>
<div style="left:968.83px;top:686.41px;font-size:12px;line-height:12px;color:#c8208c;white-space:pre;transform:scaleX(0.9074);transform-origin:50% 0;">Var1</div>
<div style="left:1026px;top:676px;width:56px;height:32.5px;background:linear-gradient(#e2e2e2,#d2d2d2 50%,#c8c8c8 55%,#d0d0d0);border:1px solid #a8a8a8;border-radius:4px;"></div>
<div style="left:1032.66px;top:686.41px;font-size:12px;line-height:12px;color:#c8208c;white-space:pre;transform:scaleX(0.8668);transform-origin:50% 0;">Var1 F2</div>
<div style="left:1083px;top:676px;width:55px;height:32.5px;background:linear-gradient(#f8f8cc,#f4f2bc 50%,#eeeca8 60%,#f2f0b6);border:1px solid #b8b878;border-radius:4px;"></div>
<div style="left:1097.83px;top:686.41px;font-size:12px;line-height:12px;color:#c8208c;white-space:pre;transform:scaleX(0.9468);transform-origin:50% 0;">Var2</div>
<div style="left:1144px;top:676px;width:56px;height:32.5px;background:linear-gradient(#e2e2e2,#d2d2d2 50%,#c8c8c8 55%,#d0d0d0);border:1px solid #a8a8a8;border-radius:4px;"></div>
<div style="left:1150.66px;top:686.41px;font-size:12px;line-height:12px;color:#c8208c;white-space:pre;transform:scaleX(0.8668);transform-origin:50% 0;">Var2 F1</div>
<div style="left:1217px;top:671px;width:78px;height:43px;background:linear-gradient(#e2e2e2,#d2d2d2 50%,#c8c8c8 55%,#d0d0d0);border:1px solid #a8a8a8;border-radius:4px;"></div>
<div style="left:1237.32px;top:686.66px;font-size:12px;line-height:12px;color:#c8208c;white-space:pre;transform:scaleX(0.8832);transform-origin:50% 0;">Ending</div>
<div style="left:0px;top:0px;width:1680px;height:25px;background:#3a3a3a;"></div>
<div style="left:0px;top:0px;width:31px;height:25px;background:#484848;"></div>
<div style="left:32px;top:0px;width:198px;height:25px;background:#262626;"></div>
<div style="left:231px;top:0px;width:199px;height:25px;background:#393939;"></div>
<svg style="left:0;top:0" width="31" height="25"><circle cx="12.2" cy="12.5" r="11" fill="#0c4fb4"/><path d="M5.5 13 C5 10 5.8 8 6.3 7 L7.5 6.5 L8.3 9 L9.5 6 L10.8 6.5 L11 9.5 C13 9.8 17 10.5 18.5 12.5 C19.5 14 18.5 16.5 15 17.5 C11 18.8 6.5 19 5.5 17 Z" fill="#fff"/><path d="M14.8 10 L15.8 5.5 M16.8 10.3 L18.7 6.2" stroke="#e8f0ff" stroke-width="1.1"/></svg>
<div style="left:35px;top:8px;width:14px;height:11px;background:#ddd;border:1px solid #f2f2f2;border-top:2px solid #6a8fd0;"></div>
<div style="left:56.00px;top:5.57px;font-size:13.5px;line-height:13.5px;color:#e8e8e8;white-space:pre;transform:scaleX(0.9772);transform-origin:0 0;">gmorgan v0.58</div>
<div style="left:233px;top:7px;width:15px;height:13px;background:#2a2a2a;border:1px solid #bbb;"></div>
<svg style="left:233px;top:7px" width="15" height="13"><path d="M3 4 L6 6 L3 8" stroke="#eee" fill="none" stroke-width="1"/><path d="M6 9 H10" stroke="#eee"/></svg>
<div style="left:255.00px;top:5.57px;font-size:13.5px;line-height:13.5px;color:#e8e8e8;white-space:pre;transform:scaleX(0.9585);transform-origin:0 0;">Terminal - vogelrl@u124: ~/...</div>
<svg style="left:1070px;top:2px" width="140" height="22"><circle cx="11" cy="11" r="9" fill="#dd3b2b"/><path d="M11 11 L19.5 8 A9 9 0 0 1 7 19 Z" fill="#f6c22c"/><path d="M11 11 L7 19 A9 9 0 0 1 3 6.5 Z" fill="#2a9d45"/><circle cx="11" cy="11" r="4.5" fill="#fff"/><circle cx="11" cy="11" r="3.3" fill="#3b79d8"/><circle cx="34" cy="11" r="10" fill="#1b6fc4"/><text x="26.5" y="16" font-family="Liberation Sans" font-style="italic" font-weight="bold" font-size="15" fill="#fff">hp</text><path d="M53 18 V6 M49 10 L53 5 L57 10" stroke="#fff" stroke-width="2.2" fill="none"/><path d="M61 6 V18 M57 14 L61 19 L65 14" stroke="#fff" stroke-width="2.2" fill="none"/><rect x="75" y="6" width="12" height="12" fill="#eee"/><path d="M81 14 L89 3" stroke="#333" stroke-width="1.5"/><rect x="74" y="18" width="14" height="2" fill="#bbb"/><rect x="98" y="5" width="17" height="13" fill="#444" stroke="#bbb"/><ellipse cx="106.5" cy="11.5" rx="6" ry="4" fill="#c02030"/><rect x="127" y="6" width="9" height="15" rx="1" fill="none" stroke="#ccc" stroke-width="1.3"/><rect x="129.5" y="4" width="4" height="2" fill="#ccc"/><path d="M133 8 L129 14 H132 L130 19" stroke="#ccc" fill="none"/></svg>
<div style="left:1223.00px;top:1.42px;font-size:12.5px;line-height:12.5px;color:#dcdcdc;white-space:pre;transform:scaleX(1.0123);transform-origin:0 0;">Sat, 13 Apr  23:45</div>
<div style="left:1238.00px;top:11.89px;font-size:11px;line-height:11px;color:#dcdcdc;white-space:pre;transform:scaleX(1.1610);transform-origin:0 0;">11:45:35 pm</div>
<div style="left:1335px;top:0px;width:287px;height:25px;background:#2c2c2c;"></div>
<div style="left:1442px;top:0px;width:1px;height:25px;background:#484848;"></div>
<div style="left:1371px;top:2px;width:35px;height:21px;border:1px solid #d8d8d8;background:#2c2c2c;"></div>
<div style="left:1479px;top:2px;width:35px;height:21px;border:1px solid #d8d8d8;background:#2c2c2c;"></div>
<div style="left:1551px;top:2px;width:35px;height:21px;border:1px solid #c8d2e6;background:#8c9bb8;"></div>
<div style="left:1559px;top:3px;width:19px;height:14px;border:1px solid #dfe6f3;background:#aab6cf;"></div>
<svg style="left:1380px;top:4px" width="18" height="18"><ellipse cx="9" cy="10" rx="7" ry="5" fill="#3a78c8"/><ellipse cx="8" cy="11" rx="5" ry="4" fill="#f0f0f0"/></svg>
<svg style="left:1487px;top:4px" width="18" height="18"><circle cx="9" cy="9" r="7" fill="#dd3b2b"/><path d="M9 9 L15.6 6.6 A7 7 0 0 1 5.9 15.3 Z" fill="#f6c22c"/><path d="M9 9 L5.9 15.3 A7 7 0 0 1 2.8 5.5 Z" fill="#2a9d45"/><circle cx="9" cy="9" r="3.5" fill="#fff"/><circle cx="9" cy="9" r="2.5" fill="#3b79d8"/></svg>
<div style="left:1636.00px;top:5.15px;font-size:14px;line-height:14px;color:#e6e6e6;white-space:pre;transform:scaleX(0.9942);transform-origin:0 0;">vogelrl</div>
</div></body></html>
